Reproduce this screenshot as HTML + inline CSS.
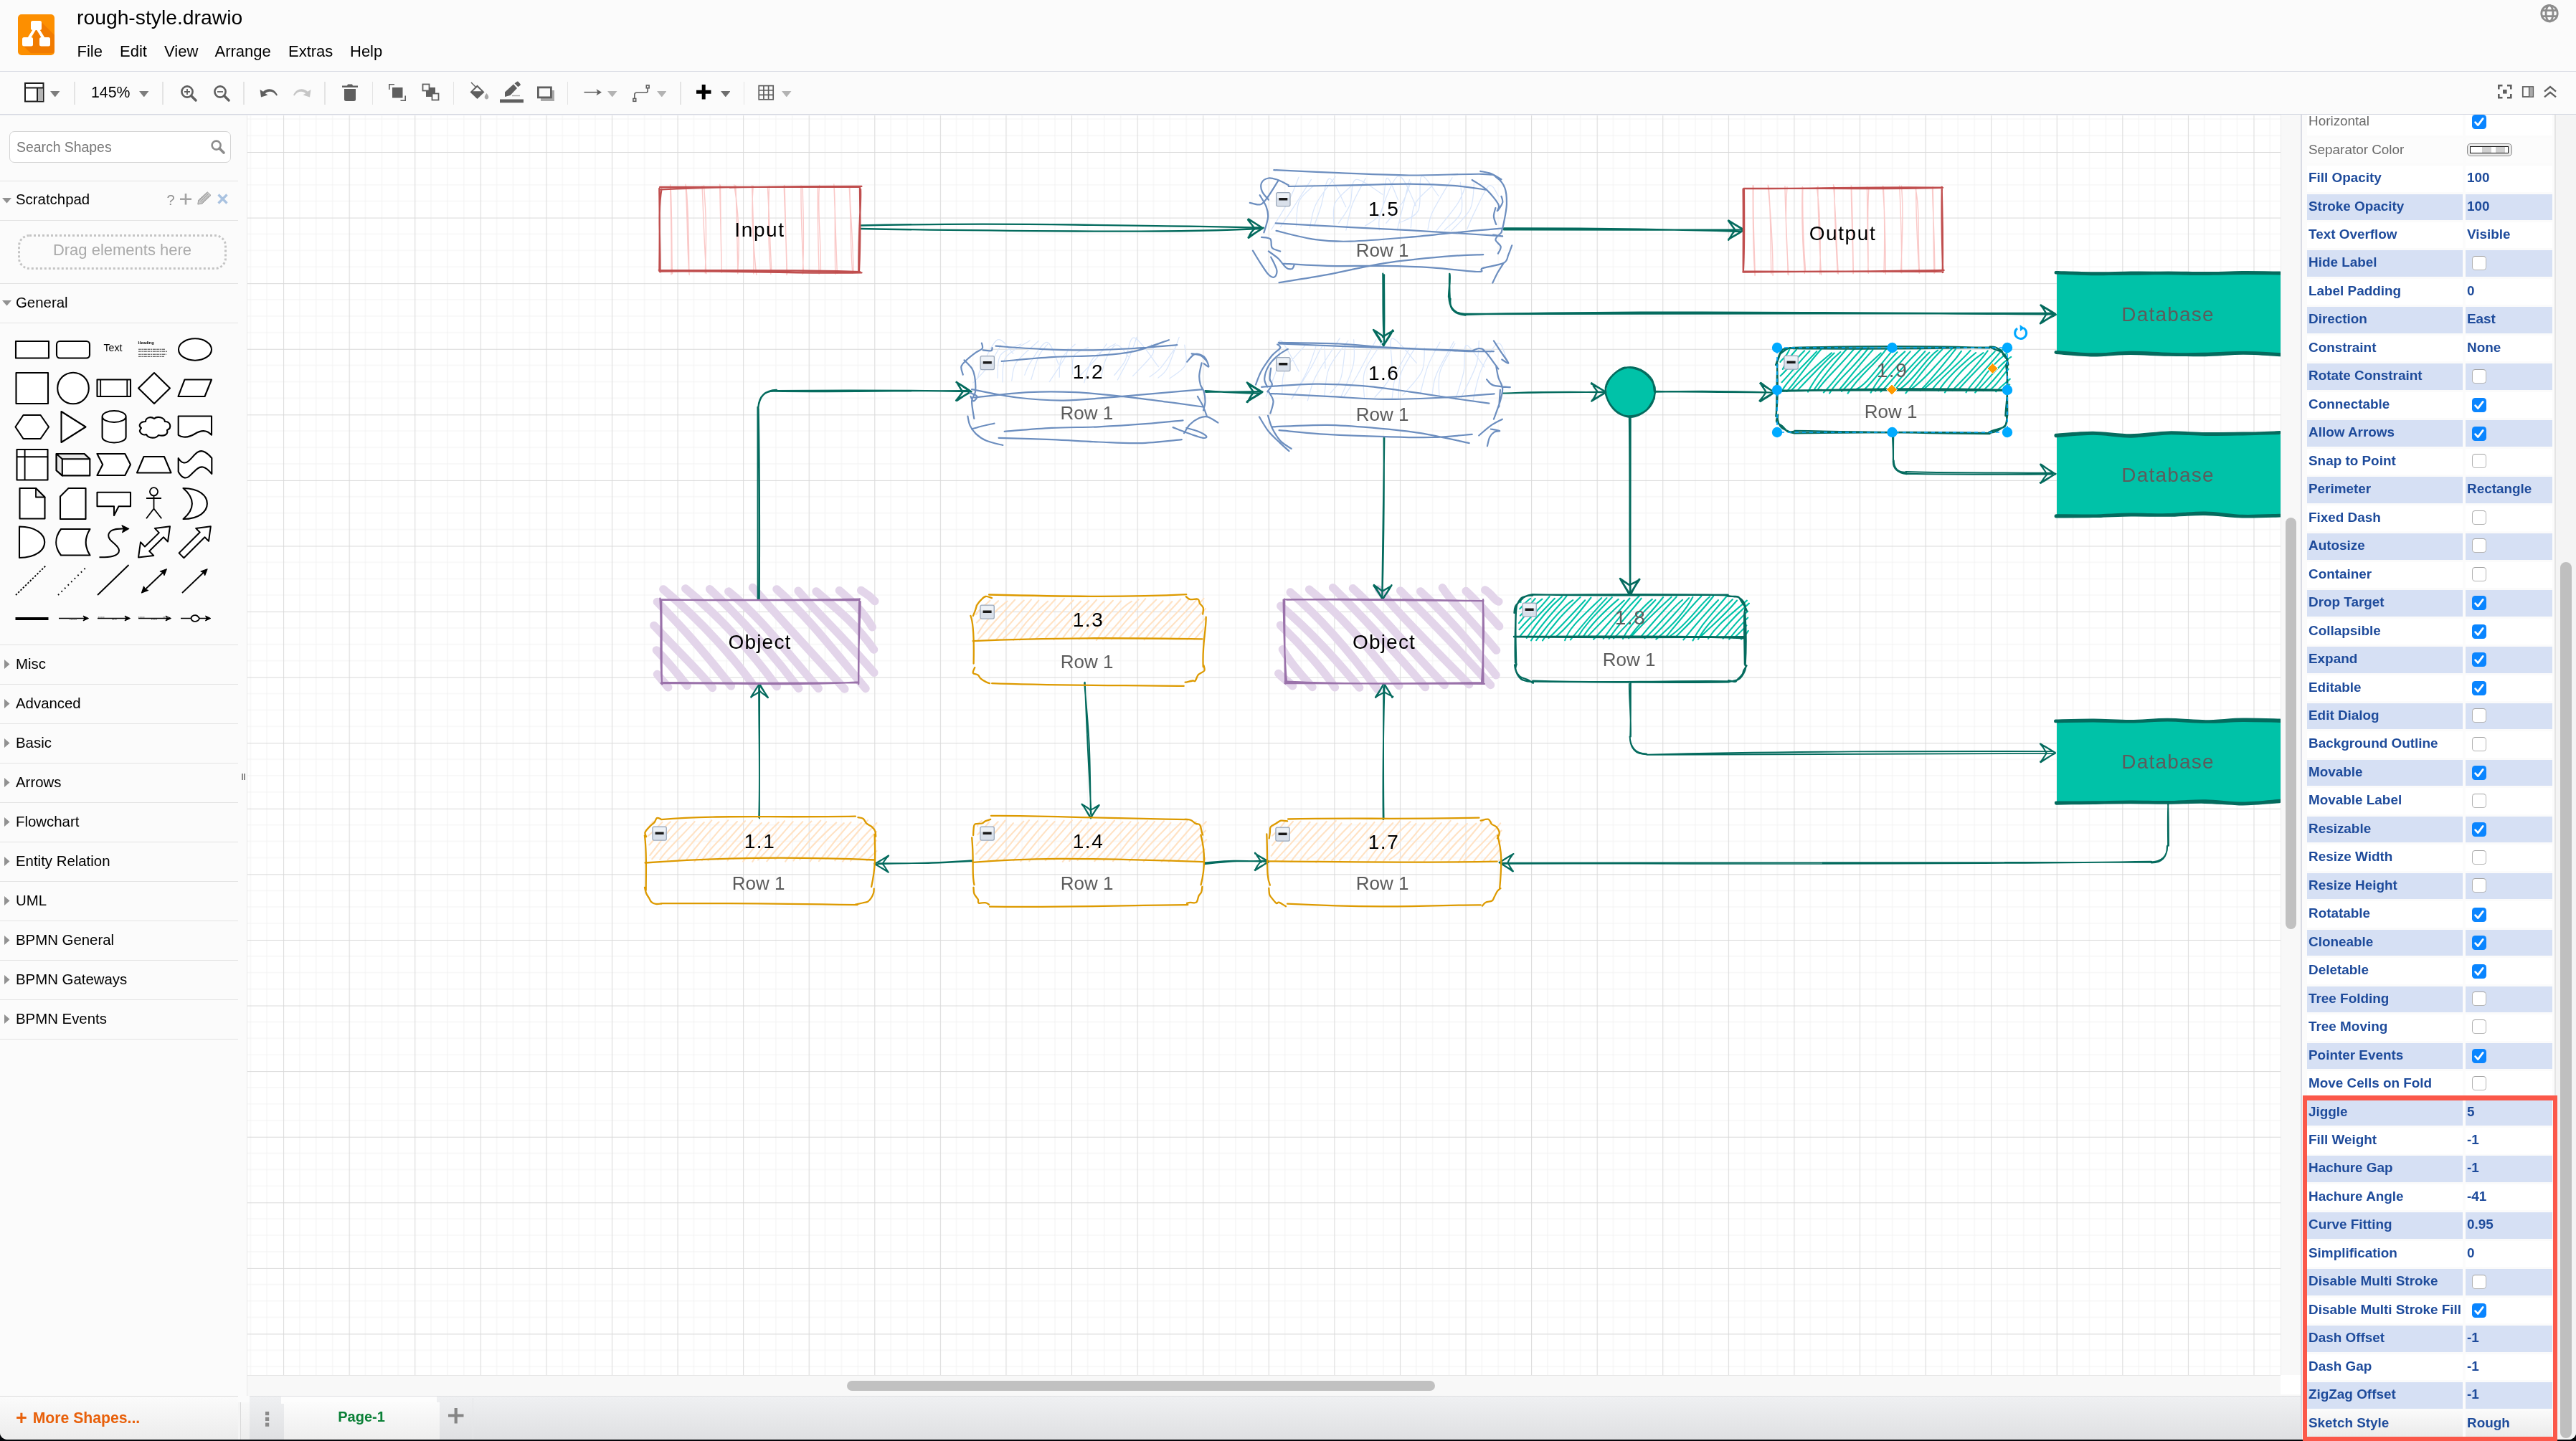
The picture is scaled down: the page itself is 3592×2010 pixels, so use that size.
<!DOCTYPE html><html><head><meta charset="utf-8"><title>rough-style.drawio</title><style>
*{box-sizing:border-box;margin:0;padding:0}
html,body{width:3592px;height:2010px;overflow:hidden;background:#04070b;font-family:"Liberation Sans",sans-serif;}
#app{will-change:transform;position:absolute;left:0;top:0;width:3592px;height:2008px;background:#fbfbfb;border-radius:0 0 10px 10px;overflow:hidden}
.abs{position:absolute}
#menubar{left:0;top:0;width:3592px;height:100px;background:#fbfbfb;border-bottom:1px solid #d6d9e2}
#title{left:107px;top:7px;font-size:28.3px;line-height:34px;color:#000;white-space:nowrap}
.menu{top:57.3px;font-size:22px;line-height:30px;color:#000;white-space:nowrap}
#toolbar{left:0;top:100px;width:3592px;height:60px;background:#fbfbfb;border-bottom:1px solid #d6d9e2}
.sep{top:114px;width:1.6px;height:32px;background:#e4e4e4}
#sidebar{left:0;top:160px;width:332px;height:1788px;background:#fbfbfb}
#split{left:332px;top:160px;width:13px;height:1848px;background:#fbfbfb}
.hr{left:0;width:332px;height:1px;background:#e3e3e3}
.stitle{left:22px;font-size:20.4px;line-height:26px;color:#000;white-space:nowrap}
#footer{left:0;top:1947px;width:332px;height:61px;border-top:1px solid #dcdcdc;background:linear-gradient(#fbfbfb,#ececec)}
#tabs{left:348px;top:1947px;width:2861px;height:61px;border-top:1px solid #dfe0e2;background:linear-gradient(#eff0f2,#dfe0e2)}
#hscroll{left:345px;top:1918px;width:2869px;height:29px;background:#f8f8f8;border-top:1px solid #e6e6e6}
#canvas{left:345px;top:160px;width:2835px;height:1758px;background:#fff;overflow:hidden}
#cedge{left:344px;top:160px;width:1px;height:1787px;background:#e8e8e8}
#vtrack{left:3180px;top:160px;width:28px;height:1758px;background:#f8f8f8;border-left:1px solid #ececec}
#panel{left:3208px;top:160px;width:384px;height:1848px;background:#fbfbfb;border-left:2px solid #d9dbe4}
.pl{left:3217px;width:217px;height:36.5px;font-size:18.9px;line-height:34px;font-weight:bold;color:#1e4b9b;padding-left:2px;white-space:nowrap;overflow:visible}
.pv{left:3438px;width:121px;height:36.5px;font-size:18.9px;line-height:34px;font-weight:bold;color:#1e4b9b;padding-left:2px;white-space:nowrap}
.alt{background:#d6e0f4}
.wh{background:#fff}
.sk{background:linear-gradient(#fafafa,#ebebeb)}
.cb{width:20px;height:20px;border-radius:4.5px}
.cb.on{background:#0a85ff}
.cb.off{background:#fff;border:1.5px solid #b4b4b4;border-top-color:#a2a2a2}
text{font-family:"Liberation Sans",sans-serif}
</style></head><body><div id="app">
<div id="menubar" class="abs"></div>
<svg class="abs" style="left:25px;top:20px" width="51" height="57" viewBox="0 0 51 57">
<rect x="0" y="0" width="51" height="57" rx="5" fill="#fd8f00"/>
<path d="M33 11 L51 29 L51 50 Q51 54.2 47 54.2 L18 54.2 L7.5 44 L20 40 L22 24 Z" fill="#f17b00"/>
<path d="M25.5 17 L12.5 38 M25.5 17 L38.5 38" stroke="#fff" stroke-width="4" fill="none"/>
<rect x="18" y="9" width="15" height="13" rx="2.5" fill="#fff"/>
<rect x="6" y="32" width="15" height="12.5" rx="2.5" fill="#fff"/>
<rect x="30" y="32" width="15" height="12.5" rx="2.5" fill="#fff"/>
</svg>
<div id="title" class="abs">rough-style.drawio</div>
<div class="abs menu" style="left:107.5px">File</div>
<div class="abs menu" style="left:167px">Edit</div>
<div class="abs menu" style="left:229px">View</div>
<div class="abs menu" style="left:299.5px">Arrange</div>
<div class="abs menu" style="left:402px">Extras</div>
<div class="abs menu" style="left:488px">Help</div>
<svg class="abs" style="left:3540px;top:4px" width="30" height="30" viewBox="0 0 30 30" fill="none" stroke="#8c8c8c" stroke-width="2.8">
<circle cx="15" cy="14.7" r="11.2"/><ellipse cx="15" cy="14.7" rx="5" ry="11.2"/><path d="M4.5 10.7 H25.5 M4.5 18.7 H25.5"/></svg>
<div id="toolbar" class="abs"></div>
<div class="abs sep" style="left:103px"></div>
<div class="abs sep" style="left:226px"></div>
<div class="abs sep" style="left:339px"></div>
<div class="abs sep" style="left:452px"></div>
<div class="abs sep" style="left:518.5px"></div>
<div class="abs sep" style="left:631.5px"></div>
<div class="abs sep" style="left:790.5px"></div>
<div class="abs sep" style="left:948px"></div>
<div class="abs sep" style="left:1036.5px"></div>
<svg class="abs" style="left:33px;top:114px" width="30" height="30" viewBox="0 0 30 30">
<rect x="2" y="2" width="25.5" height="25.5" fill="#fff" stroke="#1e1e1e" stroke-width="2"/>
<rect x="19" y="9" width="8" height="18" fill="#b4b4b4"/>
<path d="M2 8.5 H27.5 M19 8.5 V27.5" stroke="#1e1e1e" stroke-width="2" fill="none"/></svg>
<svg class="abs" style="left:70px;top:126.5px" width="13.5" height="8.5" viewBox="0 0 13.5 8.5"><path d="M0 0 H13.5 L6.75 8.5 Z" fill="#7d7d7d"/></svg>
<div class="abs" style="left:127px;top:114px;font-size:21.3px;line-height:30px;color:#000">145%</div>
<svg class="abs" style="left:194px;top:126.5px" width="13.5" height="8.5" viewBox="0 0 13.5 8.5"><path d="M0 0 H13.5 L6.75 8.5 Z" fill="#7d7d7d"/></svg>
<svg class="abs" style="left:250.5px;top:118px" width="24" height="24" viewBox="0 0 24 24" fill="none">
<circle cx="10" cy="10" r="7.6" stroke="#5f5f5f" stroke-width="2.6"/><path d="M6 10 H14 M10 6 V14" stroke="#5f5f5f" stroke-width="1.8"/><path d="M15.5 15.5 L22 22" stroke="#5f5f5f" stroke-width="3.4" stroke-linecap="round"/></svg>
<svg class="abs" style="left:296.5px;top:118px" width="24" height="24" viewBox="0 0 24 24" fill="none">
<circle cx="10" cy="10" r="7.6" stroke="#5f5f5f" stroke-width="2.6"/><path d="M6 10 H14" stroke="#5f5f5f" stroke-width="1.8"/><path d="M15.5 15.5 L22 22" stroke="#5f5f5f" stroke-width="3.4" stroke-linecap="round"/></svg>
<svg class="abs" style="left:362px;top:121px" width="26" height="16" viewBox="0 0 26 16"><path d="M0.5 4 L2 14.5 L11.5 11.5 L7.8 9.2 C12 5.5 19 5.5 23.5 12.5 L25 11.8 C21 2 11 1 5 6.8 Z" fill="#5f5f5f"/></svg>
<svg class="abs" style="left:407.5px;top:121px" width="26" height="16" viewBox="0 0 26 16"><path d="M25.5 4 L24 14.5 L14.5 11.5 L18.2 9.2 C14 5.5 7 5.5 2.5 12.5 L1 11.8 C5 2 15 1 21 6.8 Z" fill="#c6c6c6"/></svg>
<svg class="abs" style="left:476px;top:116px" width="24" height="26" viewBox="0 0 24 26"><path d="M1 3.5 H8 L9 1.5 H15 L16 3.5 H23 V6 H1 Z M4 8 H20 V22.5 Q20 25 17.5 25 H6.5 Q4 25 4 22.5 Z" fill="#5f5f5f"/></svg>
<svg class="abs" style="left:541px;top:116px" width="26" height="26" viewBox="0 0 26 26" fill="none">
<path d="M1.8 9 V1.8 H9" stroke="#5f5f5f" stroke-width="1.6"/><path d="M17.5 24.2 H24.2 V17.5" stroke="#5f5f5f" stroke-width="1.6"/>
<rect x="6" y="6" width="14.5" height="14.5" fill="#5f5f5f"/></svg>
<svg class="abs" style="left:588px;top:116px" width="26" height="26" viewBox="0 0 26 26" fill="none">
<rect x="6" y="6" width="13" height="13" fill="#5f5f5f"/>
<rect x="1.5" y="1.5" width="9" height="9" fill="#fbfbfb" stroke="#5f5f5f" stroke-width="1.8"/>
<rect x="14.5" y="14.5" width="9" height="9" fill="#fbfbfb" stroke="#5f5f5f" stroke-width="1.8"/></svg>
<svg class="abs" style="left:654px;top:114px" width="29" height="26" viewBox="0 0 29 26">
<path d="M3 1 L12 10" stroke="#5f5f5f" stroke-width="1.4" fill="none"/>
<path d="M11.5 4.5 L21.5 14.5 L11.5 24 L1.5 14.5 Z" fill="#5f5f5f"/>
<path d="M11.5 7.5 L17.5 13.2 H5.5 Z" fill="#fbfbfb"/>
<path d="M24.5 16 Q28 20.5 27.2 22.3 Q26.3 24.5 24.5 24.5 Q22.6 24.5 21.8 22.3 Q21 20.5 24.5 16 Z" fill="#a9a9a9"/></svg>
<svg class="abs" style="left:697px;top:113px" width="34" height="32" viewBox="0 0 34 32">
<path d="M20.5 3.2 L24 0.8 Q25.2 0.2 26 1.2 L28.6 4.2 Q29.3 5.2 28.4 6 L25.4 8.2 Z" fill="#5f5f5f"/>
<path d="M19 4.6 L24 10 L14.5 20 L7 22 L7 15.5 Z" fill="#5f5f5f"/>
<path d="M17 20.5 H28" stroke="#a9a9a9" stroke-width="1.5"/>
<rect x="0" y="25.5" width="33" height="4.8" fill="#5f5f5f"/></svg>
<svg class="abs" style="left:748px;top:119px" width="26" height="23" viewBox="0 0 26 23">
<rect x="6" y="7" width="19" height="15" fill="#a9a9a9"/>
<rect x="2.4" y="2.9" width="18" height="14" fill="#fbfbfb" stroke="#5f5f5f" stroke-width="2.8"/></svg>
<svg class="abs" style="left:814px;top:121px" width="26" height="16" viewBox="0 0 26 16"><path d="M0.5 7.7 H21" stroke="#5f5f5f" stroke-width="1.6"/><path d="M17.5 3.2 L25 7.7 L17.5 12.2 L19.3 7.7 Z" fill="#5f5f5f"/></svg>
<svg class="abs" style="left:847px;top:126.5px" width="13.5" height="8.5" viewBox="0 0 13.5 8.5"><path d="M0 0 H13.5 L6.75 8.5 Z" fill="#b3b3b3"/></svg>
<svg class="abs" style="left:881px;top:117px" width="28" height="27" viewBox="0 0 28 27" fill="none" stroke="#5f5f5f" stroke-width="1.6">
<path d="M3.8 20.5 V15 Q3.8 12.3 6.5 12.3 H19.5 Q22.2 12.3 22.2 9.6 V6"/><rect x="1.9" y="20.5" width="3.8" height="3.8" fill="#fbfbfb"/><rect x="20.3" y="2" width="3.8" height="3.8" fill="#fbfbfb"/></svg>
<svg class="abs" style="left:915.5px;top:126.5px" width="13.5" height="8.5" viewBox="0 0 13.5 8.5"><path d="M0 0 H13.5 L6.75 8.5 Z" fill="#b3b3b3"/></svg>
<svg class="abs" style="left:970px;top:117px" width="23" height="23" viewBox="0 0 23 23"><path d="M1 11.2 H21.5 M11.2 1 V21.5" stroke="#000" stroke-width="5"/></svg>
<svg class="abs" style="left:1004.5px;top:126.5px" width="13.5" height="8.5" viewBox="0 0 13.5 8.5"><path d="M0 0 H13.5 L6.75 8.5 Z" fill="#6e6e6e"/></svg>
<svg class="abs" style="left:1057px;top:118px" width="23" height="23" viewBox="0 0 23 23" fill="none" stroke="#5f5f5f" stroke-width="1.7">
<rect x="1.2" y="1.6" width="20" height="19.2"/><path d="M7.9 1.6 V20.8 M14.6 1.6 V20.8 M1.2 8 H21.2 M1.2 14.4 H21.2"/></svg>
<svg class="abs" style="left:1090px;top:126.5px" width="13.5" height="8.5" viewBox="0 0 13.5 8.5"><path d="M0 0 H13.5 L6.75 8.5 Z" fill="#b3b3b3"/></svg>
<svg class="abs" style="left:3482px;top:117px" width="22" height="22" viewBox="0 0 22 22" fill="none" stroke="#5f5f5f" stroke-width="2.6">
<path d="M2.3 7.5 V2.3 H7.5 M14 2.3 H19.3 V7.5 M19.3 14 V19.3 H14 M7.5 19.3 H2.3 V14"/><rect x="8" y="8" width="5.6" height="5.6" fill="#5f5f5f" stroke="none"/></svg>
<svg class="abs" style="left:3516px;top:119px" width="18" height="18" viewBox="0 0 18 18">
<rect x="1.8" y="2" width="14.4" height="14" fill="#fbfbfb" stroke="#5f5f5f" stroke-width="1.8"/><rect x="11" y="2.5" width="4.6" height="13" fill="#a9a9a9"/><path d="M10.6 2 V16" stroke="#5f5f5f" stroke-width="1.4"/></svg>
<svg class="abs" style="left:3546px;top:118px" width="20" height="20" viewBox="0 0 20 20" fill="none" stroke="#5f5f5f" stroke-width="2.3"><path d="M2 9.6 L10 3 L18 9.6 M2 17.4 L10 10.8 L18 17.4"/></svg>
<div id="sidebar" class="abs"></div><div id="split" class="abs"></div>
<div class="abs" style="left:13px;top:183px;width:309px;height:44px;border:1px solid #d3d3d3;border-radius:7px;background:#fff"></div>
<div class="abs" style="left:23px;top:190px;font-size:19.4px;line-height:30px;color:#777;white-space:nowrap">Search Shapes</div>
<svg class="abs" style="left:293px;top:194px" width="22" height="22" viewBox="0 0 22 22" fill="none"><circle cx="8.6" cy="8.6" r="6" stroke="#8c8c8c" stroke-width="2.6"/><path d="M13 13 L19 19" stroke="#8c8c8c" stroke-width="3.6" stroke-linecap="round"/></svg>
<div class="abs hr" style="top:252px"></div>
<div class="abs hr" style="top:307px"></div>
<div class="abs hr" style="top:395px"></div>
<div class="abs hr" style="top:450px"></div>
<svg class="abs" style="left:3px;top:276px" width="14" height="8"><path d="M0 0 H13 L6.5 7.5 Z" fill="#919191"/></svg>
<div class="abs stitle" style="top:265px">Scratchpad</div>
<div class="abs" style="left:232.5px;top:265px;font-size:20px;line-height:28px;color:#8f8f8f">?</div>
<svg class="abs" style="left:251px;top:270px" width="16" height="16"><path d="M0 7.8 H16 M8 0 V15.6" stroke="#a3a3a3" stroke-width="2.6"/></svg>
<svg class="abs" style="left:275px;top:267px" width="20" height="19" viewBox="0 0 20 19"><path d="M14.2 0.8 L19 5.4 L7 17 L0.8 18 L1.8 12 Z" fill="#c9c9c9" stroke="#9b9b9b" stroke-width="1"/><path d="M4.5 14.5 L15 4 M2.8 12.8 L13.4 2.2 M6.3 16 L17 5.6" stroke="#9b9b9b" stroke-width="0.9"/></svg>
<svg class="abs" style="left:303px;top:270px" width="15" height="15"><path d="M1.5 1.5 L13.5 13.5 M13.5 1.5 L1.5 13.5" stroke="#a9c2e0" stroke-width="3.2"/></svg>
<div class="abs" style="left:25px;top:327px;width:291px;height:49px;border:3px dotted #c4c4c4;border-radius:16px"></div>
<div class="abs" style="left:25px;top:334px;width:291px;text-align:center;font-size:22px;line-height:30px;color:#aaa;white-space:nowrap">Drag elements here</div>
<svg class="abs" style="left:3px;top:419px" width="14" height="8"><path d="M0 0 H13 L6.5 7.5 Z" fill="#919191"/></svg>
<div class="abs stitle" style="top:408.5px">General</div>
<svg class="abs" style="left:0;top:460px" width="332" height="430" viewBox="0 460 332 430" fill="none" stroke="#000" stroke-width="2.1" stroke-linejoin="round">
<rect x="22" y="476" width="46" height="23.5" fill="#fff"/>
<rect x="79" y="476" width="46" height="23.5" rx="4.5" fill="#fff"/>
<text x="157.5" y="489.6" font-size="14.2" fill="#000" stroke="none" text-anchor="middle">Text</text>
<text x="192.5" y="479.7" font-size="5.6" font-weight="bold" fill="#000" stroke="none">Heading</text>
<path d="M193 487.2 H230" stroke="#3a3a3a" stroke-width="1" stroke-dasharray="3.6 0.8 2.2 0.8 4.4 0.8"/>
<path d="M193 490.2 H233" stroke="#3a3a3a" stroke-width="1" stroke-dasharray="3.6 0.8 2.2 0.8 4.4 0.8"/>
<path d="M193 494.2 H232" stroke="#3a3a3a" stroke-width="1" stroke-dasharray="3.6 0.8 2.2 0.8 4.4 0.8"/>
<path d="M193 497.3 H229" stroke="#3a3a3a" stroke-width="1" stroke-dasharray="3.6 0.8 2.2 0.8 4.4 0.8"/>
<ellipse cx="272" cy="487.5" rx="23" ry="15.2" fill="#fff"/>
<rect x="22.5" y="520" width="44.5" height="43" fill="#fff"/>
<circle cx="102" cy="541.5" r="21.8" fill="#fff"/>
<rect x="135.5" y="529.5" width="46.5" height="23.5" fill="#fff"/><path d="M140.2 529.5 V553 M177.3 529.5 V553" stroke-width="1.8"/>
<path d="M215 520 L237 541.5 L215 563 L193 541.5 Z" fill="#fff"/>
<path d="M257.5 529.5 H295 L285.5 553 H248.5 Z" fill="#fff"/>
<path d="M32.5 579 H56.5 L68 595.5 L56.5 612 H32.5 L21.5 595.5 Z" fill="#fff"/>
<path d="M85.5 574 L119.5 595.5 L85.5 617 Z" fill="#fff"/>
<path d="M142.6 581 V609.5 A16.5 8 0 0 0 175.6 609.5 V581 A16.5 8 0 0 0 142.6 581 A16.5 8 0 0 0 175.6 581" fill="#fff"/>
<path d="M203 588 C196 588 192 593 197 597 C192 602 198 608 204 606 C207 612 218 612 221 607 C229 609 235 606 233 600 C240 597 238 588 230 588 C229 582 219 580 215 584 C210 580 203 583 203 588 Z" fill="#fff"/>
<path d="M248.7 580.5 H295 V606.8 C289 600 281 599.5 272 605 C263 610.5 255 611 248.7 606.8 Z" fill="#fff"/>
<rect x="23.5" y="627" width="43" height="42.5" fill="#fff"/><path d="M34.6 627 V669.5 M23.5 637.2 H66.5" stroke-width="1.9"/>
<path d="M78.7 633 H117.5 L125.3 640.2 V663.4 H86.8 L78.7 656.2 Z" fill="#fff"/><path d="M78.7 633 L86.8 640.2 V663.4 L78.7 656.2 Z M78.7 633 H117.5 L125.3 640.2 H86.8 Z" fill="#e6e6e6"/>
<path d="M135.4 633 H174.3 L182 648 L174.3 663 H135.4 L143.2 648 Z" fill="#fff"/>
<path d="M200.5 637 H229 L238.5 659.5 H191 Z" fill="#fff"/>
<path d="M248.7 639 C253 646 258 647.5 263 643 C270 637 275 627 283 629.5 C288 631 292 635 295.3 639 V661 C292 657 288 652.5 283 651.5 C275 650 270 660 263 665 C258 668.5 253 666 248.7 658 Z" fill="#fff"/>
<path d="M27.5 681 H50 L62.5 693.5 V723.5 H27.5 Z" fill="#fff"/><path d="M50 681 V693.5 H62.5 Z" fill="#e6e6e6" stroke-width="1.8"/>
<path d="M95.5 681 H119.5 V724 H84 V692.5 Z" fill="#fff"/>
<path d="M135.5 686.7 H182 V706.2 H165.5 L159 719 V706.2 H135.5 Z" fill="#fff"/>
<circle cx="214.5" cy="685.8" r="5.6" fill="#fff" stroke-width="1.8"/><path d="M214.5 691.5 V709.5 M204 695 H225 M214.5 709.5 L204 723.3 M214.5 709.5 L225.3 723.3" stroke-width="1.8"/>
<path d="M255.5 681 C300 681 300 724 255.5 724 C272 710 272 695 255.5 681 Z" fill="#fff"/>
<path d="M27 734.5 C74 734.5 74 778 27 778 Z" fill="#fff"/>
<path d="M85 738 H125.5 C118 750 118 763 125.5 774.5 H85 C76 763 76 750 85 738 Z" fill="#fff"/>
<path d="M138.5 777.3 C152 777.5 166.5 776 166 767.5 C165.5 759 149 755 151.5 745 C153.5 738 163 737.4 172.5 737.6" stroke-width="2"/><path d="M179.7 737.6 L170 732.8 L172.5 737.6 L170.6 742.7 Z" fill="#000" stroke-width="1.2"/>
<path d="M193.0 777.5 L214.2 774.9 L208.2 768.7 L228.0 749.3 L234.0 755.5 L237.0 734.3 L215.8 736.9 L221.8 743.1 L202.0 762.5 L196.0 756.3 Z" fill="#fff" stroke-width="2"/>
<path d="M256.4 778.2 L285.5 749.3 L291.0 754.9 L293.8 734.3 L273.1 736.9 L278.7 742.5 L249.6 771.4 Z" fill="#fff" stroke-width="2"/>
<path d="M22 830 L64 789" stroke-width="1.9" stroke-dasharray="2.4 2.2"/>
<path d="M81 830 L119.5 792" stroke-width="1.9" stroke-dasharray="1.8 4.6"/>
<path d="M136 830 L179.5 788" stroke-width="1.9"/>
<path d="M200.5 824 L229.5 796.5" stroke-width="1.8"/><path d="M197.5 827 L200.5 818 L202.6 822 L206.5 823.5 Z M232.3 793.7 L229 802.5 L227.2 798.6 L223.3 797 Z" fill="#000" stroke-width="1.2"/>
<path d="M254 827 L286 796.5" stroke-width="1.8"/><path d="M289 793.7 L285.7 802.5 L283.9 798.6 L280 797 Z" fill="#000" stroke-width="1.2"/>
<path d="M21.5 863 H67.5" stroke-width="4"/>
<path d="M82 862.5 H120" stroke-width="1.4"/><path d="M123.5 862.5 L116 859 L118 862.5 L116 866 Z" fill="#000" stroke-width="1"/><path d="M97 863.5 H107" stroke="#555" stroke-width="2.2" stroke-dasharray="1.4 0.7"/>
<path d="M136 862.5 H178" stroke-width="1.4"/><path d="M181.5 862.5 L174 859 L176 862.5 L174 866 Z" fill="#000" stroke-width="1"/><path d="M137 861 H146 M156 864 H163" stroke="#777" stroke-width="1.5" stroke-dasharray="1.2 0.6"/>
<path d="M193 862.5 H235" stroke-width="1.4"/><path d="M238.5 862.5 L231 859 L233 862.5 L231 866 Z" fill="#000" stroke-width="1"/><path d="M193 861 H202 M211 864 H219 M227 861 H236" stroke="#777" stroke-width="1.5" stroke-dasharray="1.2 0.6"/>
<path d="M252 862.5 H290" stroke-width="1.4"/><path d="M293.8 862.5 L286.5 859 L288.3 862.5 L286.5 866 Z" fill="#000" stroke-width="1"/><path d="M268 859.5 C272 857 275 858.5 276 860 C278.5 862 278.5 863.5 276 865.5 C273 867.5 270 867 268 865.5 C266 863.5 266 861.5 268 859.5 Z" fill="#fff" stroke-width="1.8"/>
</svg>
<div class="abs hr" style="top:898.5px"></div>
<svg class="abs" style="left:6px;top:919.5px" width="8" height="13"><path d="M0 0 L7.5 6.5 L0 13 Z" fill="#919191"/></svg>
<div class="abs stitle" style="top:912.5px">Misc</div>
<div class="abs hr" style="top:953.5px"></div>
<svg class="abs" style="left:6px;top:974.5px" width="8" height="13"><path d="M0 0 L7.5 6.5 L0 13 Z" fill="#919191"/></svg>
<div class="abs stitle" style="top:967.5px">Advanced</div>
<div class="abs hr" style="top:1008.5px"></div>
<svg class="abs" style="left:6px;top:1029.5px" width="8" height="13"><path d="M0 0 L7.5 6.5 L0 13 Z" fill="#919191"/></svg>
<div class="abs stitle" style="top:1022.5px">Basic</div>
<div class="abs hr" style="top:1063.5px"></div>
<svg class="abs" style="left:6px;top:1084.5px" width="8" height="13"><path d="M0 0 L7.5 6.5 L0 13 Z" fill="#919191"/></svg>
<div class="abs stitle" style="top:1077.5px">Arrows</div>
<div class="abs hr" style="top:1118.5px"></div>
<svg class="abs" style="left:6px;top:1139.5px" width="8" height="13"><path d="M0 0 L7.5 6.5 L0 13 Z" fill="#919191"/></svg>
<div class="abs stitle" style="top:1132.5px">Flowchart</div>
<div class="abs hr" style="top:1173.5px"></div>
<svg class="abs" style="left:6px;top:1194.5px" width="8" height="13"><path d="M0 0 L7.5 6.5 L0 13 Z" fill="#919191"/></svg>
<div class="abs stitle" style="top:1187.5px">Entity Relation</div>
<div class="abs hr" style="top:1228.5px"></div>
<svg class="abs" style="left:6px;top:1249.5px" width="8" height="13"><path d="M0 0 L7.5 6.5 L0 13 Z" fill="#919191"/></svg>
<div class="abs stitle" style="top:1242.5px">UML</div>
<div class="abs hr" style="top:1283.5px"></div>
<svg class="abs" style="left:6px;top:1304.5px" width="8" height="13"><path d="M0 0 L7.5 6.5 L0 13 Z" fill="#919191"/></svg>
<div class="abs stitle" style="top:1297.5px">BPMN General</div>
<div class="abs hr" style="top:1338.5px"></div>
<svg class="abs" style="left:6px;top:1359.5px" width="8" height="13"><path d="M0 0 L7.5 6.5 L0 13 Z" fill="#919191"/></svg>
<div class="abs stitle" style="top:1352.5px">BPMN Gateways</div>
<div class="abs hr" style="top:1393.5px"></div>
<svg class="abs" style="left:6px;top:1414.5px" width="8" height="13"><path d="M0 0 L7.5 6.5 L0 13 Z" fill="#919191"/></svg>
<div class="abs stitle" style="top:1407.5px">BPMN Events</div>
<div class="abs hr" style="top:1448.5px"></div>
<div id="footer" class="abs"></div>
<div class="abs" style="left:22px;top:1962px;font-size:21.2px;line-height:28px;font-weight:bold;color:#e8600a;white-space:nowrap"><span style="font-size:27px;position:relative;top:1.5px;margin-right:2px">+</span> More Shapes...</div>
<div class="abs" style="left:337px;top:1079px;width:1.5px;height:9px;background:#8a8a8a"></div><div class="abs" style="left:340px;top:1079px;width:1.5px;height:9px;background:#8a8a8a"></div>
<div id="canvas" class="abs"><svg class="abs" style="left:0;top:0" width="2835" height="1758" viewBox="345 160 2835 1758"><defs><pattern id="grid" x="395.05" y="212.0" width="91.58" height="91.58" patternUnits="userSpaceOnUse"><path d="M22.9 0 V91.58 M45.8 0 V91.58 M68.7 0 V91.58 M0 22.9 H91.58 M0 45.8 H91.58 M0 68.7 H91.58" stroke="#f1f1f1" stroke-width="0.9" fill="none"/><path d="M0.6 0 V91.58 M0 0.6 H91.58" stroke="#d9d9d9" stroke-width="1" fill="none"/></pattern></defs>
<rect x="345" y="160" width="2835" height="1758" fill="url(#grid)"/>
<path d="M2070.8 823.0 C2080.4 828.2 2083.6 837.7 2089.8 839.1 M2044.2 824.4 C2056.8 835.8 2065.5 845.7 2090.6 873.7 M2011.4 819.8 C2025.8 843.1 2044.7 856.0 2086.5 907.1 M1980.7 824.9 C2023.4 863.6 2062.2 911.6 2086.0 941.7 M1952.7 823.9 C1978.9 850.7 2004.8 873.5 2078.5 955.5 M1922.5 822.1 C1946.2 851.0 1980.9 886.4 2048.6 954.7 M1886.5 820.8 C1919.7 849.8 1944.3 882.5 2014.2 955.5 M1858.6 819.7 C1901.5 861.4 1939.0 902.4 1987.4 958.6 M1825.6 822.2 C1867.4 855.4 1902.5 896.9 1950.8 956.4 M1799.2 826.1 C1831.7 853.6 1869.1 891.2 1920.9 961.5 M1785.8 845.3 C1829.1 881.5 1866.7 924.9 1895.6 959.1 M1785.5 872.0 C1817.9 903.1 1847.3 937.3 1861.4 958.8 M1788.5 905.7 C1796.1 919.4 1806.1 932.6 1830.0 958.4 M1782.8 939.4 C1788.5 947.0 1794.5 947.8 1802.6 956.8" fill="none" stroke="#e3d5ea" stroke-width="11.5" stroke-linecap="round"/>
<path d="M1200.7 823.5 C1204.0 825.8 1210.6 828.5 1219.8 838.6 M1170.4 823.7 C1189.0 839.4 1204.1 853.9 1216.2 874.7 M1138.1 825.0 C1165.2 847.8 1193.8 870.4 1218.5 906.1 M1113.1 824.2 C1141.6 857.3 1174.8 887.1 1218.8 938.3 M1083.0 821.9 C1124.9 858.7 1160.1 904.4 1207.0 960.4 M1049.5 819.6 C1084.4 859.8 1117.5 894.5 1177.8 961.1 M1015.8 825.1 C1052.8 854.5 1082.5 891.4 1141.2 960.3 M989.7 821.8 C1038.8 868.0 1082.7 918.9 1113.7 960.2 M955.8 821.0 C1001.1 858.4 1043.1 902.2 1083.2 957.5 M924.9 822.0 C979.2 867.2 1026.5 921.3 1051.2 957.0 M916.4 839.4 C946.9 871.0 971.5 896.2 1019.4 956.9 M911.9 872.4 C944.0 907.1 975.7 936.9 993.4 959.4 M915.4 906.9 C927.2 918.9 939.0 932.2 958.2 956.6 M916.5 940.5 C920.3 945.3 927.1 952.7 931.7 958.7" fill="none" stroke="#e3d5ea" stroke-width="11.5" stroke-linecap="round"/>
<path d="M1199 314.5 Q1330 311.5 1500 313.5 T1757 317.5 M1199 319 Q1330 321.5 1500 322.5 T1757 319" fill="none" stroke="#046b5e" stroke-width="2.3" stroke-linecap="round" stroke-linejoin="round" />
<path d="M1740.6 331.3 C1746.7 326.8 1752.4 323.9 1761.6 317.7 M1741.1 331.7 C1746.1 327.9 1750.9 324.0 1761.0 318.1 M1760.9 318.4 C1756.8 315.5 1751.6 312.4 1741.0 305.7 M1760.8 318.2 C1755.7 314.9 1750.9 312.0 1741.0 305.6 M1740.1 306.5 C1744.0 311.6 1747.1 315.0 1749.2 319.0 M1749.8 319.0 C1746.2 321.3 1744.1 324.2 1741.2 330.7" fill="none" stroke="#046b5e" stroke-width="2.5" stroke-linecap="round" stroke-linejoin="round" />
<path d="M2097.0 318.4 C2200.2 318.3 2302.7 319.0 2427.0 323.1 M2096.8 320.3 C2214.9 321.1 2334.9 319.8 2428.6 320.6" fill="none" stroke="#046b5e" stroke-width="2.3" stroke-linecap="round" stroke-linejoin="round" />
<path d="M2410.8 333.3 C2416.1 330.2 2421.1 328.0 2431.0 321.1 M2410.4 333.5 C2418.5 329.4 2425.6 324.7 2431.4 321.1 M2431.9 320.5 C2425.6 316.9 2420.0 313.9 2410.3 307.6 M2431.1 320.8 C2424.4 316.4 2416.5 312.0 2410.6 307.8 M2410.0 308.0 C2413.4 312.1 2414.9 314.6 2419.2 320.4 M2419.4 321.8 C2416.4 324.0 2415.5 326.8 2410.3 334.6" fill="none" stroke="#046b5e" stroke-width="2.5" stroke-linecap="round" stroke-linejoin="round" />
<path d="M1930.1 383.3 C1929.6 404.2 1931.0 422.5 1930.0 480.1 M1928.3 381.7 C1928.8 418.2 1927.8 454.2 1930.3 479.0" fill="none" stroke="#046b5e" stroke-width="2.2" stroke-linecap="round" stroke-linejoin="round" />
<path d="M1915.9 460.7 C1921.0 467.2 1925.5 474.5 1929.2 482.0 M1915.5 460.3 C1918.8 466.3 1922.0 471.0 1929.4 482.2 M1929.3 481.4 C1932.5 476.4 1937.3 470.5 1942.1 461.0 M1929.2 482.4 C1932.3 476.1 1936.0 470.7 1942.0 460.7 M1942.9 461.7 C1937.9 462.9 1932.8 467.2 1928.2 469.9 M1928.1 468.8 C1924.7 466.0 1921.2 463.7 1915.1 460.0" fill="none" stroke="#046b5e" stroke-width="2.6" stroke-linecap="round" stroke-linejoin="round" />
<path d="M2021.5 382.9 C2022.4 393.6 2020.2 404.1 2020.1 414.6 M2021.3 382.0 C2021.1 392.4 2020.8 402.4 2021.6 415.4 M2022.4 416.7 Q2019.8 437.8 2043.4 439.4 M2020.6 416.2 Q2022.3 439.0 2044.5 437.9 M2044.5 438.7 C2314.9 433.0 2586.6 436.7 2865.3 438.2 M2042.0 437.9 C2336.8 437.3 2630.3 435.5 2863.7 436.9" fill="none" stroke="#046b5e" stroke-width="2.5" stroke-linecap="round" stroke-linejoin="round" />
<path d="M2846.2 450.1 C2852.3 446.1 2860.7 442.2 2866.4 438.9 M2845.5 451.0 C2851.8 447.0 2858.1 443.2 2865.8 437.9 M2866.7 438.9 C2858.4 433.5 2850.3 428.7 2845.7 425.5 M2866.1 438.0 C2862.0 435.0 2857.7 432.7 2846.1 425.7 M2845.5 425.8 C2848.6 428.4 2849.6 431.2 2854.2 438.8 M2853.4 437.5 C2852.5 440.6 2850.1 444.0 2845.0 451.2" fill="none" stroke="#046b5e" stroke-width="2.5" stroke-linecap="round" stroke-linejoin="round" />
<path d="M1056.7 836.1 C1057.0 775.5 1056.9 716.2 1056.5 567.7 M1058.8 835.4 C1059.2 749.6 1059.5 661.4 1057.6 569.9 M1057.2 570.5 Q1059.2 543.9 1081.2 545.7 M1057.3 567.8 Q1059.0 544.8 1082.9 543.9 M1080.7 545.8 C1159.0 547.0 1230.7 545.0 1351.1 545.0 M1082.1 545.0 C1172.5 544.1 1262.0 544.3 1350.7 546.1" fill="none" stroke="#046b5e" stroke-width="2.1" stroke-linecap="round" stroke-linejoin="round" />
<path d="M1334.5 558.7 C1342.0 553.5 1349.3 548.9 1353.9 546.2 M1333.9 558.7 C1337.4 555.8 1341.9 553.1 1354.4 546.3 M1353.8 546.2 C1347.0 542.7 1340.6 537.0 1334.5 533.7 M1354.2 546.3 C1347.1 541.4 1339.8 536.6 1333.5 533.2 M1333.9 532.8 C1336.2 536.1 1336.8 538.6 1342.1 546.1 M1342.4 546.5 C1340.7 548.7 1337.7 553.6 1333.2 558.6" fill="none" stroke="#046b5e" stroke-width="2.5" stroke-linecap="round" stroke-linejoin="round" />
<path d="M1680.6 545.1 C1699.2 546.3 1713.5 547.9 1757.2 548.7 M1681.2 546.8 C1706.0 546.3 1730.6 546.7 1757.2 546.2" fill="none" stroke="#046b5e" stroke-width="2.2" stroke-linecap="round" stroke-linejoin="round" />
<path d="M1739.0 560.0 C1746.6 555.3 1755.4 549.4 1760.4 546.6 M1738.7 560.7 C1743.3 557.2 1747.9 555.3 1759.6 547.4 M1759.5 547.0 C1754.7 543.8 1747.8 540.5 1739.4 533.9 M1760.0 546.6 C1755.2 544.1 1750.5 540.8 1738.9 533.6 M1739.6 534.1 C1741.5 537.7 1745.8 543.6 1747.7 546.7 M1747.7 547.2 C1745.8 549.9 1742.7 554.7 1739.6 561.0" fill="none" stroke="#046b5e" stroke-width="2.6" stroke-linecap="round" stroke-linejoin="round" />
<path d="M2095.7 548.4 C2123.7 547.8 2152.7 546.0 2236.6 547.2 M2096.4 548.6 C2140.9 546.9 2187.9 547.5 2236.5 546.5" fill="none" stroke="#046b5e" stroke-width="2.0" stroke-linecap="round" stroke-linejoin="round" />
<path d="M2219.3 559.5 C2226.0 555.3 2230.7 552.6 2239.8 546.9 M2219.6 559.2 C2225.0 555.5 2230.4 552.0 2238.7 547.2 M2239.4 546.6 C2234.1 544.2 2231.0 541.6 2218.8 535.2 M2239.3 546.8 C2232.8 543.0 2227.3 539.7 2219.3 534.6 M2219.3 534.2 C2221.8 538.6 2224.0 542.0 2227.6 546.4 M2226.6 547.0 C2224.9 551.4 2222.8 555.9 2220.1 558.4" fill="none" stroke="#046b5e" stroke-width="2.4" stroke-linecap="round" stroke-linejoin="round" />
<path d="M2306.5 546.8 C2359.8 544.8 2409.3 545.3 2471.9 547.5 M2307.8 545.7 C2349.4 546.8 2389.2 546.9 2471.4 547.4" fill="none" stroke="#046b5e" stroke-width="2.0" stroke-linecap="round" stroke-linejoin="round" />
<path d="M2454.8 559.9 C2462.5 555.0 2470.1 550.6 2474.3 547.0 M2454.7 559.7 C2461.0 554.7 2467.5 550.7 2473.8 547.5 M2474.3 547.5 C2469.2 543.6 2465.6 542.0 2455.3 533.9 M2474.1 546.7 C2469.4 544.1 2465.0 541.8 2454.3 534.8 M2455.2 535.5 C2457.2 539.3 2461.2 543.6 2462.0 546.2 M2462.5 547.0 C2459.1 552.7 2456.6 556.1 2453.6 559.2" fill="none" stroke="#046b5e" stroke-width="2.4" stroke-linecap="round" stroke-linejoin="round" />
<path d="M2273.4 579.8 C2272.7 647.6 2273.0 716.7 2273.1 826.5 M2272.1 581.6 C2273.4 679.2 2272.1 775.9 2273.4 825.3" fill="none" stroke="#046b5e" stroke-width="2.6" stroke-linecap="round" stroke-linejoin="round" />
<path d="M2259.9 808.5 C2263.4 814.5 2267.5 821.0 2272.2 829.6 M2259.5 807.6 C2262.4 812.8 2266.0 818.3 2272.9 829.2 M2273.9 829.6 C2276.2 823.3 2278.6 820.0 2285.8 807.9 M2273.1 828.8 C2276.8 822.8 2280.6 816.4 2286.2 808.0 M2286.0 808.6 C2283.1 810.5 2279.3 812.9 2272.3 815.9 M2272.4 816.3 C2270.6 814.9 2266.4 812.3 2259.1 807.1" fill="none" stroke="#046b5e" stroke-width="2.6" stroke-linecap="round" stroke-linejoin="round" />
<path d="M1929.7 609.0 C1930.0 672.7 1930.1 734.1 1927.4 831.7 M1930.3 609.2 C1929.1 654.0 1929.3 699.8 1927.3 831.8" fill="none" stroke="#046b5e" stroke-width="2.2" stroke-linecap="round" stroke-linejoin="round" />
<path d="M1916.0 815.9 C1920.1 823.1 1923.4 827.9 1928.0 835.3 M1915.5 816.9 C1920.2 822.9 1923.8 829.7 1928.1 836.2 M1927.9 835.3 C1932.0 830.1 1935.1 825.7 1940.3 816.6 M1927.6 836.3 C1931.0 831.5 1934.0 826.2 1940.5 816.2 M1939.6 817.4 C1937.2 819.3 1932.3 821.8 1928.4 824.3 M1927.5 824.4 C1923.4 821.8 1920.3 818.8 1915.8 816.1" fill="none" stroke="#046b5e" stroke-width="2.4" stroke-linecap="round" stroke-linejoin="round" />
<path d="M2638.8 604.5 C2639.1 617.1 2640.3 627.8 2639.8 642.3 M2640.4 604.5 C2639.9 616.8 2640.1 630.2 2640.0 642.0 M2639.8 643.2 Q2639.5 658.7 2658.7 661.3 M2640.7 642.3 Q2640.8 659.4 2658.3 658.8 M2657.5 658.1 C2705.0 659.8 2749.1 659.1 2862.5 659.8 M2657.8 660.8 C2701.2 661.6 2745.8 662.2 2862.1 661.6" fill="none" stroke="#046b5e" stroke-width="2.0" stroke-linecap="round" stroke-linejoin="round" />
<path d="M2844.7 673.3 C2849.8 670.4 2853.9 668.6 2866.6 660.8 M2845.5 673.7 C2851.5 670.8 2856.6 666.6 2865.8 661.4 M2865.7 660.9 C2857.6 657.1 2851.5 650.9 2845.9 647.7 M2866.4 661.4 C2858.6 655.8 2850.9 651.8 2845.6 647.8 M2845.1 647.7 C2847.3 651.6 2850.3 654.2 2854.3 661.7 M2854.8 661.3 C2851.0 665.3 2848.0 670.0 2845.6 673.8" fill="none" stroke="#046b5e" stroke-width="2.2" stroke-linecap="round" stroke-linejoin="round" />
<path d="M1058.2 1140.1 C1060.0 1083.5 1058.2 1029.8 1058.1 957.2 M1058.9 1141.4 C1058.9 1085.1 1059.1 1027.1 1059.1 958.3" fill="none" stroke="#046b5e" stroke-width="1.9" stroke-linecap="round" stroke-linejoin="round" />
<path d="M1070.7 972.7 C1068.1 968.0 1064.3 963.5 1058.4 954.5 M1071.0 972.9 C1067.7 968.3 1065.0 964.0 1059.0 953.6 M1059.7 953.4 C1054.7 959.1 1051.7 965.8 1047.2 972.2 M1059.3 953.7 C1054.5 960.5 1050.2 967.2 1047.4 972.7 M1047.9 972.0 C1049.8 970.1 1053.5 969.4 1059.5 964.2 M1059.8 964.2 C1062.3 967.6 1066.5 968.6 1070.6 973.1" fill="none" stroke="#046b5e" stroke-width="2.1" stroke-linecap="round" stroke-linejoin="round" />
<path d="M1512.1 952.5 C1513.2 966.9 1517.3 1008.8 1518.8 1039.3 C1520.2 1069.8 1520.5 1119.5 1520.8 1135.6 M1512.8 951.8 C1513.4 966.7 1515.2 1010.6 1516.7 1041.4 C1518.2 1072.2 1520.9 1120.8 1521.7 1136.7" fill="none" stroke="#046b5e" stroke-width="1.9" stroke-linecap="round" stroke-linejoin="round" />
<path d="M1508.8 1122.3 C1513.1 1126.6 1514.8 1132.4 1521.2 1140.1 M1509.7 1122.4 C1512.9 1127.6 1515.7 1133.2 1520.9 1141.3 M1521.1 1140.4 C1523.2 1135.9 1526.6 1131.6 1532.6 1123.3 M1521.2 1140.9 C1524.7 1134.3 1528.5 1128.2 1532.6 1122.8 M1532.1 1123.1 C1528.4 1125.5 1525.1 1128.4 1520.1 1129.7 M1520.7 1130.5 C1517.8 1127.2 1514.3 1125.4 1508.5 1121.7" fill="none" stroke="#046b5e" stroke-width="2.1" stroke-linecap="round" stroke-linejoin="round" />
<path d="M1928.7 1143.2 C1928.0 1084.7 1928.8 1025.7 1930.6 956.8 M1929.6 1142.5 C1928.8 1098.1 1928.9 1053.0 1929.2 958.2" fill="none" stroke="#046b5e" stroke-width="1.9" stroke-linecap="round" stroke-linejoin="round" />
<path d="M1941.3 973.0 C1938.7 966.4 1934.6 961.4 1930.9 954.7 M1941.3 972.5 C1938.6 968.0 1935.7 963.1 1929.9 954.0 M1929.2 953.7 C1927.2 957.7 1924.8 963.1 1918.4 973.0 M1929.6 954.0 C1927.6 957.8 1925.0 961.4 1917.9 972.5 M1918.6 972.1 C1922.6 969.9 1927.9 966.6 1930.1 965.8 M1929.8 964.8 C1933.8 968.2 1939.0 970.1 1942.4 971.8" fill="none" stroke="#046b5e" stroke-width="2.1" stroke-linecap="round" stroke-linejoin="round" />
<path d="M1356.3 1201.0 C1346.8 1201.5 1321.5 1203.2 1299.6 1203.7 C1277.7 1204.3 1237.4 1204.2 1225.0 1204.3 M1356.1 1200.2 C1346.9 1200.7 1322.8 1202.4 1300.5 1203.3 C1278.2 1204.1 1235.6 1204.8 1222.6 1205.1" fill="none" stroke="#046b5e" stroke-width="1.9" stroke-linecap="round" stroke-linejoin="round" />
<path d="M1238.9 1193.4 C1233.7 1196.8 1228.9 1200.8 1219.7 1204.7 M1239.1 1193.6 C1231.3 1197.9 1224.6 1202.2 1219.9 1204.8 M1219.5 1204.7 C1226.0 1209.1 1232.4 1212.3 1237.8 1215.9 M1219.7 1205.4 C1226.7 1208.6 1232.5 1213.0 1238.9 1216.6 M1238.3 1216.4 C1236.5 1213.3 1234.0 1208.8 1230.9 1205.4 M1230.3 1204.8 C1233.7 1200.7 1235.3 1196.5 1238.8 1194.1" fill="none" stroke="#046b5e" stroke-width="2.1" stroke-linecap="round" stroke-linejoin="round" />
<path d="M1678.9 1203.3 C1685.8 1202.9 1706.0 1201.1 1720.4 1200.8 C1734.8 1200.6 1757.8 1201.6 1765.3 1201.8 M1679.2 1205.4 C1685.8 1204.7 1704.6 1202.4 1718.7 1201.6 C1732.9 1200.8 1756.4 1200.9 1763.9 1200.7" fill="none" stroke="#046b5e" stroke-width="1.9" stroke-linecap="round" stroke-linejoin="round" />
<path d="M1749.6 1213.4 C1754.2 1210.6 1759.8 1207.3 1768.6 1202.6 M1750.8 1213.6 C1757.4 1209.5 1764.4 1204.8 1768.7 1201.6 M1768.3 1201.7 C1760.8 1197.7 1753.9 1193.3 1749.9 1189.8 M1769.4 1201.8 C1763.0 1198.2 1757.9 1195.5 1750.1 1190.7 M1750.2 1189.5 C1752.8 1194.0 1755.2 1196.8 1758.8 1202.7 M1758.4 1201.4 C1754.1 1206.1 1751.3 1210.6 1750.1 1214.1" fill="none" stroke="#046b5e" stroke-width="2.1" stroke-linecap="round" stroke-linejoin="round" />
<path d="M2271.9 953.8 C2271.3 972.0 2274.4 993.0 2273.9 1027.6 M2273.9 951.8 C2273.7 978.9 2274.1 1005.9 2273.2 1027.5 M2272.7 1027.6 Q2273.4 1052.8 2296.6 1052.3 M2272.6 1027.4 Q2274.1 1051.5 2295.9 1051.5 M2297.2 1052.6 C2492.9 1047.6 2689.9 1047.9 2862.7 1048.1 M2296.4 1052.7 C2466.7 1052.7 2636.4 1052.5 2862.9 1050.9" fill="none" stroke="#046b5e" stroke-width="1.9" stroke-linecap="round" stroke-linejoin="round" />
<path d="M2845.0 1062.3 C2850.9 1060.4 2855.2 1055.8 2865.7 1050.9 M2845.8 1063.1 C2850.7 1059.9 2855.0 1056.9 2865.6 1050.3 M2865.8 1049.8 C2858.6 1046.0 2852.3 1041.5 2844.8 1037.5 M2866.0 1050.5 C2860.4 1046.1 2854.5 1043.0 2845.6 1037.6 M2845.2 1037.9 C2847.9 1040.9 2850.1 1043.5 2854.0 1050.9 M2853.6 1050.6 C2852.2 1052.8 2851.2 1054.9 2845.3 1063.0" fill="none" stroke="#046b5e" stroke-width="2.1" stroke-linecap="round" stroke-linejoin="round" />
<path d="M3023.0 1120.4 C3023.8 1134.3 3023.7 1146.0 3024.0 1179.7 M3023.4 1121.4 C3022.5 1134.0 3022.8 1148.1 3023.1 1179.5 M3021.8 1180.3 Q3022.2 1203.3 3000.0 1203.6 M3022.2 1179.5 Q3022.8 1201.7 2998.6 1202.5 M2999.8 1201.7 C2702.5 1206.5 2408.9 1204.2 2092.5 1204.7 M2999.5 1202.7 C2707.2 1203.2 2415.5 1203.6 2093.9 1203.6" fill="none" stroke="#046b5e" stroke-width="1.9" stroke-linecap="round" stroke-linejoin="round" />
<path d="M2110.5 1191.0 C2104.8 1194.2 2099.3 1197.6 2091.7 1202.6 M2109.9 1191.4 C2102.7 1195.2 2095.8 1199.8 2090.9 1203.4 M2090.5 1202.8 C2095.2 1206.7 2100.2 1208.8 2109.3 1215.3 M2090.6 1202.9 C2097.7 1207.6 2104.9 1211.6 2110.0 1215.1 M2109.4 1214.6 C2107.7 1212.6 2106.6 1210.8 2102.9 1203.9 M2102.4 1203.9 C2103.3 1199.6 2106.0 1196.7 2109.1 1192.2" fill="none" stroke="#046b5e" stroke-width="2.1" stroke-linecap="round" stroke-linejoin="round" />
<path d="M1185.0 260.4 C1184.8 286.6 1188.7 318.7 1190.1 379.6 M1184.2 260.0 C1186.9 304.3 1185.4 347.0 1188.9 381.1 M1162.8 256.9 C1165.5 284.0 1163.5 313.3 1164.8 382.6 M1163.0 258.9 C1164.1 288.3 1164.9 318.9 1167.3 381.1 M1142.6 258.5 C1139.4 291.3 1144.8 328.9 1144.4 379.1 M1140.4 260.0 C1139.7 296.1 1140.7 333.1 1142.1 382.2 M1119.3 261.5 C1119.4 291.4 1122.1 323.2 1119.2 382.3 M1117.0 258.9 C1116.7 290.6 1117.5 320.5 1120.5 380.7 M1093.3 258.9 C1093.8 290.2 1096.1 315.9 1097.0 383.6 M1094.0 258.4 C1095.0 283.8 1094.8 308.1 1097.6 381.7 M1070.3 260.7 C1072.0 286.7 1072.5 309.2 1075.8 378.7 M1072.4 259.4 C1071.0 308.2 1072.2 356.2 1074.9 382.2 M1050.2 259.4 C1047.1 300.3 1050.4 339.9 1054.7 383.3 M1048.6 258.8 C1049.2 284.7 1051.6 310.3 1050.9 381.9 M1023.8 257.9 C1030.7 300.0 1031.6 338.7 1028.7 381.2 M1025.8 258.7 C1027.6 305.0 1028.3 349.2 1028.8 381.8 M1003.6 257.3 C1004.5 284.1 1005.2 313.4 1006.4 380.4 M1004.5 258.5 C1005.0 296.7 1004.8 336.5 1006.5 380.3 M981.5 258.6 C983.4 285.3 986.0 313.2 983.3 380.9 M979.0 259.6 C980.7 289.2 980.8 318.1 984.8 381.7 M955.9 257.3 C959.1 303.6 957.9 348.6 961.2 383.2 M956.9 260.0 C960.7 305.3 960.5 351.6 960.8 380.3 M934.6 257.7 C934.9 289.3 936.9 324.2 936.0 383.0 M935.2 260.2 C937.3 303.6 936.4 350.7 937.5 381.8" fill="none" stroke="#fac9c8" stroke-width="1.4" stroke-linecap="round" stroke-linejoin="round" />
<path d="M921.2 264.3 C988.9 261.5 1056.9 259.8 1201.4 259.9 M920.2 261.0 C1029.6 261.4 1137.5 260.7 1199.4 260.9 M1200.0 263.9 C1201.0 286.0 1197.3 309.9 1197.3 378.1 M1199.0 260.9 C1199.2 293.6 1200.4 325.0 1198.0 377.5 M1201.5 380.4 C1126.7 382.0 1052.2 377.5 919.9 378.5 M1199.1 379.2 C1103.7 375.9 1011.8 378.1 918.7 376.8 M920.4 379.4 C921.0 332.9 917.1 294.7 922.5 263.8 M919.4 378.2 C919.8 344.9 920.2 312.6 919.3 263.0" fill="none" stroke="#c04e4e" stroke-width="2.3" stroke-linecap="round" stroke-linejoin="round" />
<text x="1059.5" y="330.0" font-size="28" fill="#000" text-anchor="middle" letter-spacing="1.6">Input</text>
<path d="M2694.5 261.6 C2694.7 287.2 2697.3 316.0 2697.9 380.6 M2695.2 260.5 C2696.5 305.9 2695.7 352.3 2697.1 381.2 M2671.0 262.3 C2677.5 293.9 2673.6 330.6 2676.6 381.1 M2671.7 260.9 C2671.7 303.7 2673.9 346.2 2676.1 381.0 M2651.4 259.1 C2654.0 287.4 2653.5 321.3 2650.5 380.0 M2648.6 258.9 C2651.0 302.2 2651.6 341.0 2651.7 380.7 M2626.3 260.2 C2627.8 293.4 2628.4 326.3 2627.0 380.4 M2625.2 259.5 C2627.6 285.7 2628.9 313.9 2629.3 382.3 M2605.9 262.7 C2602.8 306.5 2606.1 347.6 2604.7 380.2 M2603.4 260.4 C2604.1 301.5 2604.0 344.2 2605.3 381.3 M2581.3 259.0 C2581.5 301.6 2583.8 338.5 2584.0 381.8 M2581.6 259.1 C2583.1 293.9 2583.3 324.1 2584.4 381.3 M2556.5 257.7 C2560.1 297.7 2560.4 337.2 2563.3 382.1 M2558.1 259.9 C2557.5 293.6 2559.5 327.7 2562.3 381.4 M2533.5 261.8 C2537.7 293.8 2539.2 330.4 2537.7 382.3 M2534.9 259.6 C2534.9 306.7 2537.9 355.8 2539.5 383.2 M2513.9 261.7 C2513.0 302.8 2514.8 340.8 2517.7 379.3 M2513.3 260.4 C2512.0 297.4 2513.1 335.2 2516.4 381.5 M2492.0 260.7 C2489.4 290.2 2489.8 319.9 2494.0 383.6 M2489.0 259.6 C2489.5 304.8 2492.9 350.7 2493.0 382.8 M2465.2 258.2 C2469.5 302.4 2472.2 341.7 2472.1 384.3 M2466.1 259.4 C2469.2 291.5 2468.7 324.0 2469.8 381.9 M2444.2 258.6 C2444.4 300.1 2443.9 344.3 2447.1 384.5 M2445.0 258.9 C2444.1 300.5 2446.1 340.2 2447.3 383.2" fill="none" stroke="#fac9c8" stroke-width="1.4" stroke-linecap="round" stroke-linejoin="round" />
<path d="M2433.6 263.1 C2534.8 263.2 2639.5 260.0 2708.3 261.8 M2431.5 262.9 C2526.1 262.2 2621.5 264.4 2709.0 261.8 M2707.7 261.0 C2707.9 288.2 2709.5 312.2 2708.8 380.0 M2707.9 261.7 C2706.8 300.2 2707.9 336.9 2709.2 379.9 M2710.6 377.0 C2624.6 378.2 2545.2 379.7 2430.5 378.5 M2707.6 378.8 C2603.3 378.3 2499.2 378.6 2430.5 379.7 M2430.8 378.3 C2432.7 347.8 2432.1 311.0 2431.9 264.3 M2430.8 379.4 C2430.5 349.6 2431.3 320.1 2430.6 263.6" fill="none" stroke="#c04e4e" stroke-width="2.3" stroke-linecap="round" stroke-linejoin="round" />
<text x="2569.5" y="335.0" font-size="28" fill="#000" text-anchor="middle" letter-spacing="1.6">Output</text>
<clipPath id="pc922"><rect x="900" y="821" width="321" height="142"/></clipPath>
<path d="M921.4 837.0 C1014.9 836.3 1108.3 837.6 1199.1 835.5 M921.4 836.2 C979.2 837.9 1034.9 837.5 1197.6 836.9 M1199.6 839.2 C1199.3 867.2 1196.2 904.3 1197.2 953.1 M1198.3 835.7 C1196.8 867.1 1198.1 896.7 1197.2 954.2 M1197.4 951.3 C1117.9 956.4 1040.0 952.8 921.7 953.2 M1197.4 952.2 C1122.4 952.9 1049.5 953.4 922.2 951.9 M923.2 954.4 C919.4 912.6 923.3 875.2 920.4 834.5 M922.9 952.2 C922.2 926.3 923.0 897.8 922.2 836.7" fill="none" stroke="#9a72aa" stroke-width="2.2" stroke-linecap="round" stroke-linejoin="round" />
<text x="1059.5" y="905.0" font-size="28" fill="#000" text-anchor="middle" letter-spacing="1.2">Object</text>
<clipPath id="pc1792"><rect x="1770" y="821" width="322" height="142"/></clipPath>
<path d="M1794.3 836.6 C1872.8 834.6 1954.6 836.4 2067.8 838.0 M1791.1 835.8 C1855.4 836.7 1919.8 837.7 2068.5 838.2 M2067.8 838.7 C2069.1 861.8 2070.0 885.4 2066.0 953.7 M2068.1 836.0 C2068.1 861.6 2067.4 883.6 2068.5 953.6 M2069.9 953.9 C1966.5 953.1 1861.5 955.0 1791.8 950.4 M2066.8 952.0 C1986.8 953.5 1906.3 953.8 1791.4 952.9 M1794.2 952.9 C1790.7 918.0 1790.5 885.8 1789.6 836.5 M1792.3 953.7 C1791.4 927.4 1791.2 903.9 1791.2 835.7" fill="none" stroke="#9a72aa" stroke-width="2.2" stroke-linecap="round" stroke-linejoin="round" />
<text x="1930.0" y="905.0" font-size="28" fill="#000" text-anchor="middle" letter-spacing="1.2">Object</text>
<path d="M1361.0 844.5 C1364.8 839.8 1366.8 837.8 1367.6 837.3 M1361.1 857.0 C1364.5 851.0 1369.6 848.0 1380.4 837.8 M1361.9 868.6 C1370.1 860.5 1376.3 852.4 1392.0 838.2 M1363.8 883.3 C1372.9 867.1 1386.4 852.7 1404.5 838.6 M1364.0 892.1 C1378.3 876.6 1389.0 864.7 1415.1 836.8 M1378.5 891.0 C1388.5 878.2 1398.1 865.3 1427.7 837.5 M1389.1 892.2 C1399.6 880.1 1412.1 865.8 1437.9 836.4 M1399.5 890.3 C1415.2 876.7 1428.1 861.6 1448.3 837.6 M1413.1 892.9 C1422.8 876.9 1434.2 862.3 1461.0 838.7 M1422.1 892.7 C1433.0 878.7 1442.9 866.2 1471.6 836.0 M1436.2 890.2 C1450.3 870.2 1466.6 854.5 1484.0 834.9 M1444.4 890.7 C1459.5 877.2 1473.7 861.3 1496.7 837.3 M1458.3 889.2 C1466.6 878.4 1477.8 868.8 1507.0 838.7 M1469.5 892.2 C1488.8 868.0 1507.2 847.9 1518.3 837.9 M1482.6 889.2 C1495.6 870.3 1512.1 856.0 1529.0 836.7 M1494.0 890.3 C1508.1 876.3 1518.7 859.4 1539.6 838.7 M1504.7 891.7 C1514.1 879.0 1523.6 867.2 1551.9 837.8 M1516.0 891.4 C1524.4 881.1 1538.8 866.4 1563.0 838.4 M1528.9 892.9 C1545.3 867.5 1564.3 846.6 1577.9 838.8 M1537.9 891.7 C1554.2 876.1 1567.3 858.8 1587.5 836.4 M1549.8 891.3 C1562.7 872.8 1577.9 858.5 1597.2 835.1 M1560.1 890.2 C1574.8 874.2 1587.6 860.1 1612.3 836.5 M1574.9 889.8 C1586.1 879.6 1594.7 864.2 1621.6 838.2 M1584.7 890.9 C1603.3 870.9 1620.3 855.0 1634.4 839.0 M1595.6 892.3 C1614.0 868.6 1634.2 850.0 1646.3 835.7 M1606.5 890.1 C1625.4 869.8 1646.7 850.1 1658.5 835.1 M1618.8 889.1 C1629.7 876.9 1644.0 863.4 1669.0 836.1 M1631.6 890.5 C1640.0 877.8 1650.0 867.9 1678.5 834.9 M1642.8 890.9 C1654.5 877.0 1664.5 866.6 1681.1 849.0 M1655.5 891.9 C1662.7 883.7 1669.2 875.1 1681.1 862.1 M1665.2 891.7 C1671.0 886.2 1676.3 879.8 1680.9 874.4 M1677.0 891.7 C1679.1 890.3 1679.8 889.3 1679.7 886.8" fill="none" stroke="#ffe2c4" stroke-width="2.1" stroke-linecap="round" stroke-linejoin="round" />
<path d="M1379.1 829.5 C1477.4 831.8 1566.6 833.5 1654.2 829.1 M1653.9 832.2 C1654.8 832.8 1656.7 835.5 1659.4 836.1 C1662.2 836.7 1668.0 834.8 1670.3 835.7 C1672.6 836.7 1671.9 839.8 1673.1 841.8 C1674.4 843.8 1677.0 845.2 1677.7 847.6 C1678.4 850.1 1677.3 855.1 1677.2 856.6 M1681.7 860.6 C1681.8 880.9 1676.2 897.3 1677.7 930.2 M1678.5 928.2 C1678.7 929.5 1680.5 933.3 1679.3 935.5 C1678.0 937.6 1673.1 938.7 1671.0 941.1 C1668.9 943.4 1668.0 948.2 1666.7 949.6 C1665.3 951.0 1665.4 949.2 1663.1 949.5 C1660.8 949.9 1654.4 951.4 1652.7 951.7 M1650.7 956.9 C1560.4 955.8 1458.7 956.1 1383.2 953.1 M1379.9 953.1 C1378.9 952.8 1376.4 952.0 1374.4 950.9 C1372.3 949.9 1369.3 948.2 1367.6 946.7 C1365.8 945.1 1365.7 943.0 1363.9 941.7 C1362.1 940.3 1357.6 940.5 1356.8 938.7 C1356.0 937.0 1358.8 932.4 1359.2 931.1 M1357.6 925.5 C1358.0 905.3 1358.9 872.2 1353.4 858.9 M1356.9 859.0 C1357.6 857.4 1359.7 851.9 1360.6 849.3 C1361.5 846.8 1361.3 845.8 1362.5 843.7 C1363.7 841.7 1365.9 838.9 1367.9 836.9 C1369.8 835.0 1371.8 832.5 1374.3 832.0 C1376.8 831.5 1381.5 833.8 1383.0 834.1" fill="none" stroke="#dd9a00" stroke-width="2.3" stroke-linecap="round" stroke-linejoin="round" />
<path d="M1356.7 894.1 C1473.0 888.6 1585.4 890.3 1676.4 891.3" fill="none" stroke="#dd9a00" stroke-width="2.3" stroke-linecap="round" stroke-linejoin="round" />
<g transform="translate(1366.3 843.5)"><rect x="0.6" y="0.6" width="19.4" height="19" rx="2" fill="#d9e0ea" stroke="#9ba8ba" stroke-width="1.2"/><rect x="1.8" y="1.8" width="17" height="6.5" rx="1.2" fill="#eef2f7" stroke="none"/><rect x="4.3" y="8" width="12" height="3.5" fill="#1a1a1a"/></g>
<text x="1517.5" y="873.5" font-size="28" fill="#000" text-anchor="middle" letter-spacing="1.5">1.3</text>
<text x="1515.5" y="931.5" font-size="26" fill="#5c5c5c" text-anchor="middle" letter-spacing="0">Row 1</text>
<path d="M906.1 1152.9 C905.1 1151.8 908.1 1149.9 911.1 1145.6 M903.8 1165.8 C910.7 1160.5 914.6 1155.7 923.6 1146.8 M905.3 1178.5 C917.4 1165.6 927.6 1151.2 934.8 1146.3 M906.2 1193.1 C920.6 1174.4 936.4 1152.7 944.7 1145.3 M909.3 1198.2 C926.7 1177.8 945.3 1157.2 956.7 1147.3 M920.2 1198.8 C930.2 1184.5 947.1 1170.0 968.6 1146.1 M930.9 1199.1 C944.9 1187.5 956.7 1173.0 981.8 1147.1 M944.7 1202.2 C954.6 1186.6 963.9 1177.3 992.3 1144.4 M956.9 1199.5 C971.6 1179.3 991.6 1156.1 1002.5 1146.5 M968.5 1201.7 C980.5 1184.1 992.9 1169.1 1015.3 1144.1 M978.8 1200.1 C985.7 1189.3 996.7 1177.9 1027.9 1146.0 M987.4 1200.1 C1005.4 1184.7 1015.9 1169.3 1039.0 1145.2 M1001.1 1199.0 C1016.9 1182.3 1034.4 1162.7 1049.1 1144.6 M1014.7 1200.4 C1019.7 1187.2 1029.4 1178.4 1061.8 1148.0 M1022.6 1197.9 C1036.6 1185.5 1048.6 1173.8 1072.0 1147.4 M1036.2 1201.6 C1048.6 1184.3 1064.3 1167.7 1085.8 1147.0 M1049.2 1201.9 C1059.5 1184.0 1070.8 1174.3 1094.0 1145.1 M1057.1 1199.4 C1067.1 1188.2 1079.1 1178.0 1105.7 1146.2 M1069.4 1201.4 C1079.3 1187.6 1092.0 1174.5 1119.3 1146.2 M1080.8 1198.7 C1098.0 1180.1 1115.0 1160.7 1131.5 1145.6 M1095.1 1201.7 C1103.3 1190.2 1112.5 1177.7 1144.2 1144.7 M1106.5 1200.5 C1114.8 1187.4 1125.3 1176.7 1152.2 1146.4 M1115.2 1199.1 C1130.6 1181.7 1146.1 1165.6 1166.2 1147.4 M1129.8 1201.3 C1140.9 1182.7 1154.7 1168.5 1176.8 1148.1 M1142.0 1201.1 C1153.8 1187.4 1163.7 1172.1 1186.6 1146.8 M1151.8 1198.1 C1169.9 1177.0 1188.7 1159.1 1201.2 1147.6 M1164.3 1200.3 C1176.5 1182.7 1190.9 1166.6 1210.0 1144.1 M1175.1 1201.6 C1188.3 1183.0 1200.5 1171.0 1222.4 1148.0 M1186.0 1200.9 C1199.0 1187.2 1208.9 1172.8 1222.2 1160.0 M1196.5 1198.8 C1207.9 1190.5 1215.5 1177.9 1222.2 1172.4 M1208.8 1200.3 C1212.8 1196.1 1216.8 1191.8 1222.5 1187.0" fill="none" stroke="#ffe2c4" stroke-width="2.1" stroke-linecap="round" stroke-linejoin="round" />
<path d="M922.0 1143.2 C995.4 1136.5 1066.0 1140.6 1192.9 1138.7 M1196.4 1140.2 C1197.6 1140.5 1201.7 1140.6 1203.7 1142.0 C1205.7 1143.5 1206.4 1146.8 1208.4 1148.7 C1210.5 1150.7 1214.1 1151.8 1216.1 1153.6 C1218.0 1155.3 1219.4 1156.9 1220.2 1159.1 C1221.1 1161.3 1221.0 1165.4 1221.2 1166.6 M1219.6 1163.9 C1220.5 1191.8 1221.2 1209.3 1215.1 1236.9 M1218.7 1239.7 C1218.6 1240.7 1218.7 1243.4 1218.1 1245.5 C1217.4 1247.6 1216.3 1250.3 1214.9 1252.4 C1213.6 1254.4 1212.0 1256.5 1210.0 1257.7 C1208.0 1258.9 1205.5 1258.8 1202.7 1259.5 C1199.9 1260.2 1194.7 1261.3 1193.1 1261.7 M1195.6 1262.2 C1092.4 1260.5 992.9 1259.7 921.7 1260.2 M922.5 1260.5 C921.2 1260.5 916.9 1261.3 914.5 1260.9 C912.1 1260.6 909.8 1259.5 908.3 1258.1 C906.7 1256.8 906.3 1254.8 905.1 1252.7 C903.9 1250.7 902.1 1248.5 901.1 1246.0 C900.1 1243.5 899.3 1239.2 899.0 1237.8 M900.7 1241.9 C900.7 1214.1 902.0 1187.6 898.9 1165.4 M901.2 1167.1 C900.9 1166.1 898.6 1163.4 899.6 1160.8 C900.6 1158.3 904.9 1154.1 907.0 1151.9 C909.1 1149.6 910.9 1149.0 912.4 1147.2 C913.9 1145.4 914.5 1141.9 916.0 1141.1 C917.5 1140.3 920.7 1142.2 921.6 1142.5" fill="none" stroke="#dd9a00" stroke-width="2.3" stroke-linecap="round" stroke-linejoin="round" />
<path d="M899.6 1203.5 C1010.3 1195.1 1119.6 1195.3 1219.4 1199.5" fill="none" stroke="#dd9a00" stroke-width="2.3" stroke-linecap="round" stroke-linejoin="round" />
<g transform="translate(909.3 1152.5)"><rect x="0.6" y="0.6" width="19.4" height="19" rx="2" fill="#d9e0ea" stroke="#9ba8ba" stroke-width="1.2"/><rect x="1.8" y="1.8" width="17" height="6.5" rx="1.2" fill="#eef2f7" stroke="none"/><rect x="4.3" y="8" width="12" height="3.5" fill="#1a1a1a"/></g>
<text x="1059.5" y="1182.5" font-size="28" fill="#000" text-anchor="middle" letter-spacing="1.5">1.1</text>
<text x="1057.5" y="1240.5" font-size="26" fill="#5c5c5c" text-anchor="middle" letter-spacing="0">Row 1</text>
<path d="M1363.2 1152.4 C1363.0 1150.3 1365.5 1147.2 1368.8 1145.1 M1363.3 1164.2 C1368.9 1157.3 1375.1 1153.1 1379.2 1146.4 M1361.8 1179.1 C1369.4 1168.8 1378.8 1159.4 1391.7 1146.3 M1361.0 1191.2 C1373.8 1176.8 1383.5 1166.8 1401.6 1144.5 M1365.9 1199.0 C1377.6 1186.3 1390.4 1174.5 1412.9 1148.1 M1378.0 1199.7 C1392.6 1182.1 1408.4 1165.4 1427.3 1145.7 M1388.8 1200.3 C1403.8 1185.6 1413.6 1171.5 1435.1 1144.0 M1398.7 1200.0 C1419.2 1178.2 1433.9 1158.6 1446.8 1145.2 M1413.3 1200.4 C1427.4 1184.2 1438.9 1166.8 1460.3 1144.3 M1423.3 1201.3 C1440.7 1179.5 1458.6 1157.2 1470.6 1146.0 M1435.3 1201.1 C1453.3 1180.6 1469.7 1162.9 1483.6 1144.6 M1444.4 1198.2 C1456.7 1186.9 1466.1 1177.7 1494.8 1144.4 M1457.8 1200.2 C1474.5 1183.0 1491.2 1162.2 1507.9 1144.3 M1469.9 1199.0 C1482.2 1187.4 1492.6 1177.5 1518.0 1147.2 M1481.9 1201.9 C1496.2 1183.0 1510.0 1167.1 1529.3 1147.2 M1491.2 1201.0 C1501.1 1188.4 1510.9 1178.4 1541.1 1146.8 M1502.6 1200.0 C1516.5 1183.4 1533.5 1168.8 1554.0 1144.5 M1514.3 1197.9 C1533.5 1184.3 1546.9 1162.5 1565.5 1146.7 M1526.3 1201.2 C1538.3 1187.5 1547.3 1178.7 1576.5 1146.1 M1539.1 1200.4 C1550.3 1187.7 1562.3 1174.9 1587.3 1147.5 M1552.1 1201.2 C1565.7 1183.1 1578.7 1164.5 1599.9 1144.9 M1561.9 1198.9 C1576.6 1183.1 1594.8 1164.0 1610.0 1145.8 M1574.9 1201.4 C1588.2 1186.2 1600.9 1168.4 1623.0 1145.2 M1585.4 1199.4 C1600.7 1178.9 1620.5 1162.1 1632.4 1147.8 M1594.8 1201.7 C1613.6 1177.6 1636.6 1158.0 1646.9 1147.5 M1607.9 1200.0 C1621.0 1186.3 1631.8 1172.9 1656.0 1144.1 M1619.7 1201.9 C1636.0 1182.8 1652.0 1164.0 1667.8 1146.2 M1629.6 1202.0 C1646.3 1181.0 1663.2 1165.6 1681.8 1146.2 M1642.8 1200.2 C1651.6 1188.7 1661.0 1177.5 1681.1 1158.6 M1655.2 1199.4 C1663.0 1191.3 1670.2 1182.9 1682.2 1171.3 M1666.0 1199.7 C1669.3 1195.8 1672.3 1192.0 1679.9 1184.5 M1679.2 1201.0 C1679.3 1200.0 1680.7 1199.3 1680.8 1196.8" fill="none" stroke="#ffe2c4" stroke-width="2.1" stroke-linecap="round" stroke-linejoin="round" />
<path d="M1382.0 1137.9 C1441.5 1137.2 1497.1 1140.6 1656.8 1143.1 M1652.2 1142.8 C1653.6 1143.0 1657.5 1142.8 1660.1 1143.8 C1662.7 1144.8 1665.5 1147.7 1667.7 1148.9 C1669.9 1150.0 1671.8 1148.8 1673.2 1150.8 C1674.5 1152.8 1675.2 1158.5 1675.9 1160.9 C1676.6 1163.2 1677.0 1164.1 1677.2 1164.7 M1674.5 1164.6 C1680.6 1188.1 1680.3 1211.7 1674.6 1234.3 M1676.4 1237.0 C1676.2 1238.2 1676.1 1242.2 1675.2 1244.4 C1674.4 1246.5 1672.7 1247.3 1671.5 1249.7 C1670.3 1252.1 1670.2 1257.2 1668.2 1258.7 C1666.3 1260.2 1661.9 1258.6 1659.7 1258.8 C1657.5 1259.0 1655.9 1259.7 1655.1 1259.9 M1656.4 1262.1 C1591.9 1262.1 1525.6 1265.9 1380.1 1264.7 M1379.0 1261.7 C1378.2 1261.2 1376.2 1259.4 1373.8 1259.1 C1371.4 1258.8 1366.4 1260.3 1364.8 1259.6 C1363.1 1258.8 1364.8 1256.8 1363.8 1254.6 C1362.7 1252.4 1359.4 1249.4 1358.4 1246.6 C1357.4 1243.8 1357.7 1239.3 1357.5 1237.9 M1358.5 1234.2 C1354.6 1217.9 1358.5 1204.1 1355.2 1168.3 M1357.1 1165.0 C1357.2 1163.5 1357.3 1158.7 1357.6 1156.1 C1358.0 1153.5 1357.5 1150.9 1359.4 1149.6 C1361.3 1148.3 1366.8 1149.2 1369.2 1148.5 C1371.6 1147.8 1371.8 1146.3 1373.8 1145.4 C1375.8 1144.4 1380.0 1143.3 1381.2 1142.9" fill="none" stroke="#dd9a00" stroke-width="2.3" stroke-linecap="round" stroke-linejoin="round" />
<path d="M1356.4 1202.9 C1427.0 1196.9 1497.0 1195.9 1677.6 1202.2" fill="none" stroke="#dd9a00" stroke-width="2.3" stroke-linecap="round" stroke-linejoin="round" />
<g transform="translate(1366.3 1152.5)"><rect x="0.6" y="0.6" width="19.4" height="19" rx="2" fill="#d9e0ea" stroke="#9ba8ba" stroke-width="1.2"/><rect x="1.8" y="1.8" width="17" height="6.5" rx="1.2" fill="#eef2f7" stroke="none"/><rect x="4.3" y="8" width="12" height="3.5" fill="#1a1a1a"/></g>
<text x="1517.5" y="1182.5" font-size="28" fill="#000" text-anchor="middle" letter-spacing="1.5">1.4</text>
<text x="1515.5" y="1240.5" font-size="26" fill="#5c5c5c" text-anchor="middle" letter-spacing="0">Row 1</text>
<path d="M1773.1 1153.4 C1776.5 1152.3 1777.0 1151.4 1781.0 1146.7 M1773.9 1165.7 C1778.9 1161.5 1784.5 1155.5 1791.9 1145.9 M1774.0 1179.2 C1783.1 1167.5 1792.2 1158.4 1803.0 1145.8 M1772.6 1194.0 C1785.2 1177.1 1799.5 1161.1 1813.5 1145.6 M1778.2 1199.9 C1790.8 1187.6 1799.9 1177.2 1826.7 1146.8 M1787.1 1202.0 C1806.6 1182.4 1820.8 1164.1 1836.2 1148.3 M1800.0 1202.0 C1814.2 1181.4 1831.3 1167.5 1849.8 1145.8 M1813.1 1199.7 C1823.2 1186.6 1831.2 1176.3 1862.8 1145.0 M1822.7 1199.1 C1836.1 1190.0 1847.6 1175.7 1870.5 1148.1 M1835.3 1203.1 C1850.6 1182.5 1867.4 1166.2 1884.3 1148.9 M1846.2 1198.9 C1859.1 1187.2 1873.0 1173.2 1896.5 1148.1 M1857.2 1200.0 C1868.7 1189.1 1880.9 1174.7 1905.1 1148.3 M1868.1 1200.0 C1886.3 1180.7 1905.0 1161.3 1916.5 1146.8 M1882.1 1201.2 C1889.9 1189.5 1902.1 1177.1 1929.0 1145.5 M1893.9 1200.0 C1907.8 1183.5 1922.8 1167.3 1942.2 1148.0 M1906.9 1202.3 C1921.2 1180.0 1939.9 1159.9 1952.0 1145.2 M1917.7 1201.1 C1931.4 1181.8 1946.2 1163.0 1966.6 1146.1 M1929.1 1200.8 C1939.1 1188.0 1946.7 1179.6 1974.4 1148.8 M1937.6 1199.2 C1953.3 1188.4 1966.8 1172.2 1986.3 1148.2 M1951.3 1199.6 C1963.6 1182.5 1979.5 1167.1 2001.7 1145.0 M1964.5 1199.8 C1980.1 1182.3 1996.3 1162.3 2009.7 1147.9 M1972.3 1200.7 C1986.5 1187.6 2001.0 1169.5 2022.6 1144.9 M1985.8 1201.2 C1999.2 1184.9 2014.3 1169.1 2032.4 1148.5 M1997.9 1199.2 C2013.1 1183.9 2025.0 1167.6 2045.8 1149.0 M2009.5 1199.4 C2019.1 1188.3 2030.7 1172.9 2058.4 1148.6 M2019.6 1201.4 C2037.9 1181.9 2055.2 1160.7 2067.9 1145.2 M2033.7 1203.0 C2040.4 1191.6 2052.7 1175.9 2080.2 1146.4 M2041.5 1200.8 C2056.2 1185.5 2070.9 1174.3 2092.2 1148.3 M2054.8 1201.6 C2064.8 1188.5 2075.2 1177.0 2093.6 1158.4 M2067.8 1201.6 C2074.9 1192.8 2082.8 1184.5 2093.2 1172.3 M2077.8 1200.2 C2082.8 1195.3 2087.9 1191.2 2091.7 1183.9 M2089.8 1200.0 C2091.4 1201.1 2090.8 1199.1 2093.3 1197.9" fill="none" stroke="#ffe2c4" stroke-width="2.1" stroke-linecap="round" stroke-linejoin="round" />
<path d="M1796.1 1142.5 C1877.8 1140.5 1959.9 1143.2 2062.4 1140.6 M2064.7 1144.6 C2066.5 1144.3 2073.0 1142.0 2075.5 1142.8 C2078.1 1143.6 2078.2 1147.8 2080.0 1149.5 C2081.9 1151.3 2084.7 1151.3 2086.5 1153.3 C2088.3 1155.4 2090.6 1159.0 2090.8 1161.7 C2091.0 1164.4 2088.4 1168.1 2088.0 1169.3 M2088.3 1165.4 C2094.0 1187.8 2094.6 1200.3 2091.1 1240.0 M2092.3 1239.1 C2091.5 1239.8 2089.1 1241.5 2087.7 1243.4 C2086.3 1245.4 2085.0 1248.7 2083.8 1250.9 C2082.6 1253.1 2082.5 1255.2 2080.5 1256.5 C2078.4 1257.8 2073.9 1257.6 2071.7 1258.8 C2069.4 1259.9 2067.7 1262.8 2066.9 1263.6 M2064.8 1262.3 C2007.2 1261.9 1946.4 1268.2 1795.0 1260.7 M1793.0 1264.2 C1791.4 1263.3 1785.6 1259.5 1783.4 1258.7 C1781.2 1258.0 1781.5 1261.0 1779.6 1259.7 C1777.7 1258.3 1773.4 1252.7 1771.8 1250.6 C1770.2 1248.4 1770.4 1248.8 1770.0 1246.9 C1769.6 1244.9 1769.4 1240.1 1769.3 1238.8 M1770.9 1234.6 C1765.4 1221.5 1768.1 1206.7 1766.3 1163.5 M1769.7 1169.3 C1769.9 1168.0 1770.5 1164.3 1770.8 1161.7 C1771.2 1159.0 1770.5 1155.5 1771.7 1153.5 C1773.0 1151.4 1775.8 1150.8 1778.2 1149.3 C1780.6 1147.9 1783.3 1145.4 1786.1 1144.7 C1788.9 1144.1 1793.6 1145.2 1795.1 1145.3" fill="none" stroke="#dd9a00" stroke-width="2.3" stroke-linecap="round" stroke-linejoin="round" />
<path d="M1769.4 1201.3 C1843.2 1201.3 1912.0 1204.5 2087.7 1201.6" fill="none" stroke="#dd9a00" stroke-width="2.3" stroke-linecap="round" stroke-linejoin="round" />
<g transform="translate(1778.3 1153.5)"><rect x="0.6" y="0.6" width="19.4" height="19" rx="2" fill="#d9e0ea" stroke="#9ba8ba" stroke-width="1.2"/><rect x="1.8" y="1.8" width="17" height="6.5" rx="1.2" fill="#eef2f7" stroke="none"/><rect x="4.3" y="8" width="12" height="3.5" fill="#1a1a1a"/></g>
<text x="1929.5" y="1183.5" font-size="28" fill="#000" text-anchor="middle" letter-spacing="1.5">1.7</text>
<text x="1927.5" y="1241.0" font-size="26" fill="#5c5c5c" text-anchor="middle" letter-spacing="0">Row 1</text>
<path d="M1772.9 320.3 C1777.0 313.4 1791.1 291.3 1797.4 279.1 C1803.8 266.9 1808.9 252.4 1811.1 247.1 M1785.5 316.4 C1788.5 312.0 1796.0 300.9 1803.2 289.9 C1810.3 278.9 1824.2 256.9 1828.4 250.4 M1807.4 315.4 C1808.1 309.6 1807.4 290.1 1811.6 280.6 C1815.8 271.1 1829.1 262.1 1832.6 258.4 M1826.4 318.0 C1827.8 312.5 1828.9 296.9 1834.9 285.0 C1840.8 273.0 1857.6 252.8 1862.1 246.3 M1832.5 315.1 C1834.1 310.6 1838.2 299.4 1841.8 288.3 C1845.4 277.3 1848.2 248.8 1854.0 248.8 C1859.8 248.9 1872.9 281.9 1876.7 288.6 M1859.9 312.6 C1860.2 307.7 1857.5 292.1 1861.7 283.1 C1866.0 274.0 1881.5 262.5 1885.4 258.3 M1866.5 311.3 C1869.2 307.0 1878.4 295.5 1882.4 285.4 C1886.4 275.3 1882.9 253.0 1890.5 250.6 C1898.0 248.2 1921.6 267.7 1927.8 271.1 M1876.9 321.2 C1878.4 315.2 1881.0 297.6 1885.5 285.6 C1890.1 273.6 1901.0 255.0 1904.1 248.9 M1903.4 315.3 C1907.2 312.1 1921.0 307.2 1926.0 296.1 C1931.1 285.0 1929.9 251.5 1933.8 248.6 C1937.7 245.8 1946.9 273.8 1949.5 278.8 M1923.3 320.8 C1923.6 316.8 1920.7 309.0 1925.2 296.5 C1929.6 284.0 1941.8 247.1 1950.1 245.6 C1958.3 244.1 1970.4 280.5 1974.5 287.5 M1932.8 311.3 C1936.6 306.5 1949.6 292.4 1955.4 282.8 C1961.1 273.2 1965.4 258.5 1967.4 253.6 M1948.3 321.0 C1949.4 316.5 1951.9 305.6 1954.8 293.8 C1957.6 282.1 1963.7 257.8 1965.5 250.6 M1951.4 311.0 C1955.8 308.0 1972.7 304.0 1977.8 293.2 C1982.9 282.3 1977.4 249.3 1982.1 246.0 C1986.8 242.7 2002.0 268.8 2006.0 273.4 M1967.3 317.9 C1968.2 312.3 1967.8 294.5 1973.2 284.3 C1978.5 274.2 1995.1 261.5 1999.5 256.9 M1991.0 320.0 C1992.1 315.9 1992.1 307.1 1997.8 295.1 C2003.5 283.1 2020.4 255.7 2025.0 247.8 M2003.2 321.6 C2008.1 315.3 2025.7 294.8 2032.6 283.9 C2039.5 273.1 2042.6 261.1 2044.6 256.5 M2014.4 320.8 C2018.2 316.6 2033.8 306.8 2037.4 295.7 C2041.1 284.6 2036.5 261.1 2036.3 254.1 M2023.9 321.7 C2028.3 316.6 2045.1 302.7 2050.4 291.1 C2055.6 279.4 2054.7 258.5 2055.6 252.0 M2045.8 319.5 C2047.5 315.5 2051.2 305.9 2056.2 295.9 C2061.3 285.8 2070.8 262.9 2076.3 259.1 C2081.8 255.4 2087.1 271.0 2089.3 273.4" fill="none" stroke="#d9e6fb" stroke-width="1.25" stroke-linecap="round" stroke-linejoin="round" />
<path d="M1776.3 237.1 C1791.4 237.8 1835.4 240.0 1866.8 241.2 C1898.2 242.4 1931.2 244.2 1964.7 244.5 C1998.1 244.7 2047.0 242.3 2067.4 242.8 C2087.8 243.4 2081.8 244.5 2087.0 247.7 C2092.2 251.0 2096.1 256.2 2098.4 262.4 C2100.7 268.7 2101.1 277.1 2100.9 285.2 C2100.6 293.4 2098.0 304.8 2096.8 311.3 C2095.6 317.9 2094.1 322.2 2093.5 324.4 M1796.7 260.0 C1811.1 259.7 1855.1 258.9 1883.1 258.3 C1911.1 257.8 1940.2 256.6 1964.7 256.7 C1989.1 256.8 2011.8 257.8 2029.9 259.1 C2048.0 260.5 2065.9 263.9 2073.1 264.9 M2052.7 251.0 C2056.1 253.3 2067.0 259.1 2073.1 264.9 C2079.2 270.6 2087.0 280.3 2089.4 285.2 C2091.9 290.1 2086.9 294.6 2087.8 294.2 C2088.8 293.8 2094.2 286.2 2095.1 282.8 C2096.1 279.4 2093.8 275.3 2093.5 273.8 M2064.2 238.8 C2066.6 239.3 2073.9 240.1 2078.8 242.0 C2083.7 243.9 2091.1 248.8 2093.5 250.2 M1796.7 258.3 C1794.2 257.1 1786.6 252.6 1782.0 251.0 C1777.4 249.4 1772.7 247.9 1768.9 248.5 C1765.1 249.2 1760.6 251.9 1759.1 255.1 C1757.7 258.2 1758.3 263.4 1760.0 267.3 C1761.6 271.2 1767.4 276.8 1768.9 278.7 M1756.7 272.2 C1758.2 274.9 1763.8 283.3 1765.7 288.5 C1767.6 293.7 1768.7 297.2 1768.1 303.2 C1767.6 309.2 1763.4 320.9 1762.4 324.4 M1742.8 282.8 C1745.3 283.2 1753.4 286.5 1757.5 285.2 C1761.6 284.0 1763.2 280.9 1767.3 275.5 C1771.4 270.0 1779.5 256.4 1782.0 252.6 M1778.7 311.3 C1793.4 312.2 1835.8 314.6 1866.8 316.2 C1897.8 317.9 1926.6 319.0 1964.7 321.1 C2002.7 323.3 2073.4 327.9 2095.1 329.3 M1779.5 321.9 C1788.6 324.0 1816.9 331.7 1834.2 334.2 C1851.4 336.6 1861.4 337.2 1883.1 336.6 C1904.9 336.1 1937.5 333.2 1964.7 330.9 C1991.8 328.6 2024.7 324.8 2046.2 322.8 C2067.7 320.7 2085.6 319.4 2093.5 318.7 M1759.1 330.9 C1761.2 331.3 1768.9 330.9 1771.4 333.4 C1773.8 335.8 1771.5 342.7 1773.8 345.6 C1776.1 348.4 1783.3 349.7 1785.2 350.5 M1746.9 349.7 C1748.7 352.5 1753.8 361.2 1757.5 366.8 C1761.2 372.4 1765.7 379.8 1768.9 383.1 C1772.2 386.4 1775.2 387.5 1777.1 386.4 C1779.0 385.3 1781.2 381.2 1780.3 376.6 C1779.5 372.0 1773.6 361.6 1772.2 358.6 M1768.9 350.5 C1771.1 352.1 1777.9 356.5 1782.0 360.3 C1786.1 364.1 1790.1 370.9 1793.4 373.3 C1796.7 375.8 1799.6 375.6 1801.6 375.0 C1803.5 374.3 1804.3 370.2 1804.8 369.2 M1788.5 367.6 C1798.8 368.2 1826.6 370.3 1850.5 370.9 C1874.4 371.4 1907.6 370.5 1932.0 370.9 C1956.5 371.3 1975.8 372.0 1997.3 373.3 C2018.8 374.7 2049.2 378.9 2060.9 379.0 C2072.6 379.2 2061.4 376.2 2067.4 374.1 C2073.4 372.1 2090.8 369.9 2096.8 366.8 C2102.8 363.7 2101.4 359.5 2103.3 355.4 C2105.2 351.3 2107.4 344.5 2108.2 342.3 M1783.6 394.2 C1794.8 392.3 1825.7 387.7 1850.5 383.1 C1875.2 378.5 1904.9 371.0 1932.0 366.8 C1959.2 362.6 1990.9 359.8 2013.6 357.8 C2036.3 355.9 2059.1 355.5 2068.2 355.1 M2093.5 324.4 C2092.2 326.0 2085.5 330.9 2085.4 334.2 C2085.2 337.4 2092.1 340.7 2092.7 344.0 C2093.3 347.2 2089.6 352.1 2088.9 353.7 M2096.8 366.8 C2095.4 369.0 2091.2 375.2 2088.6 379.8 C2086.0 384.5 2082.5 392.1 2081.3 394.5 M2082.1 327.6 C2084.3 328.0 2093.0 329.3 2095.1 329.6 M2085.4 290.1 C2084.9 292.0 2082.8 297.7 2082.9 301.6 C2083.0 305.4 2085.6 311.1 2086.2 313.0" fill="none" stroke="#6c8ebf" stroke-width="2.2" stroke-linecap="round" stroke-linejoin="round" />
<g transform="translate(1779 268)"><rect x="0.6" y="0.6" width="19.4" height="19" rx="2" fill="#d9e0ea" stroke="#9ba8ba" stroke-width="1.2"/><rect x="1.8" y="1.8" width="17" height="6.5" rx="1.2" fill="#eef2f7" stroke="none"/><rect x="4.3" y="8" width="12" height="3.5" fill="#1a1a1a"/></g>
<text x="1929.7" y="301" font-size="28" fill="#000" text-anchor="middle" letter-spacing="1.5">1.5</text>
<text x="1927.7" y="357.5" font-size="26" fill="#5c5c5c" text-anchor="middle" letter-spacing="0">Row 1</text>
<path d="M1357.0 533.9 C1360.5 530.1 1371.4 519.8 1377.8 511.2 C1384.2 502.5 1392.5 486.6 1395.4 481.7 M1363.0 527.9 C1363.9 525.2 1363.9 521.1 1368.6 512.1 C1373.3 503.1 1383.7 477.0 1391.0 473.9 C1398.4 470.8 1409.2 490.1 1412.8 493.3 M1391.0 527.2 C1391.7 521.8 1389.7 503.0 1395.2 495.1 C1400.6 487.2 1419.1 482.3 1423.9 479.8 M1398.0 532.9 C1398.7 527.2 1396.1 508.4 1402.4 498.7 C1408.8 489.1 1430.5 479.0 1436.1 475.0 M1410.7 531.1 C1411.9 526.8 1411.2 514.5 1417.5 505.2 C1423.7 495.9 1443.2 480.4 1448.3 475.5 M1428.7 523.2 C1430.1 520.2 1431.7 512.9 1436.9 505.3 C1442.1 497.7 1453.4 477.0 1459.9 477.4 C1466.5 477.9 1473.4 503.0 1476.0 508.1 M1437.8 529.5 C1439.6 523.9 1444.9 504.4 1448.8 496.1 C1452.7 487.9 1459.0 482.7 1461.0 480.0 M1463.3 532.5 C1466.9 527.0 1480.3 507.3 1484.6 499.5 C1489.0 491.7 1488.6 487.9 1489.4 485.6 M1477.2 526.1 C1477.7 521.9 1476.2 508.4 1479.9 500.7 C1483.5 493.0 1496.0 483.5 1499.2 480.1 M1495.5 522.0 C1495.8 517.7 1493.8 502.3 1497.5 496.1 C1501.2 489.9 1514.1 486.5 1517.4 484.6 M1503.8 526.3 C1507.9 521.9 1522.2 507.7 1528.8 500.0 C1535.3 492.2 1540.7 483.0 1543.1 479.6 M1511.7 533.8 C1513.8 528.1 1517.1 508.7 1524.4 499.7 C1531.6 490.6 1550.2 482.8 1555.3 479.4 M1535.3 526.7 C1536.5 522.2 1538.7 507.5 1542.4 499.9 C1546.1 492.3 1552.0 481.4 1557.3 481.1 C1562.6 480.8 1571.3 495.3 1574.1 498.1 M1558.3 530.0 C1561.0 524.7 1570.2 508.2 1574.7 498.2 C1579.2 488.3 1583.4 474.9 1585.1 470.3 M1553.8 523.4 C1556.3 520.1 1564.0 512.3 1568.7 503.6 C1573.3 494.9 1573.8 469.9 1581.6 471.2 C1589.4 472.6 1609.8 504.8 1615.4 511.5 M1579.6 524.4 C1584.2 519.4 1602.7 501.7 1607.1 494.4 C1611.4 487.1 1605.8 482.7 1605.5 480.4 M1603.2 525.8 C1605.8 523.6 1612.8 519.5 1618.7 512.8 C1624.6 506.1 1635.4 490.1 1638.7 485.5 M1614.9 527.1 C1617.1 524.7 1623.3 522.1 1628.2 512.7 C1633.1 503.2 1641.5 477.5 1644.2 470.4 M1631.0 527.8 C1634.6 524.7 1649.4 517.0 1652.9 509.2 C1656.4 501.5 1652.0 485.9 1651.8 481.2" fill="none" stroke="#d9e6fb" stroke-width="1.25" stroke-linecap="round" stroke-linejoin="round" />
<path d="M1388.5 482.7 C1398.8 483.4 1429.3 485.9 1450.5 486.8 C1471.7 487.8 1494.0 488.6 1515.7 488.4 C1537.5 488.3 1560.0 487.2 1581.0 486.0 C1601.9 484.8 1631.3 481.9 1641.3 481.1 M1396.7 503.9 C1408.3 503.0 1444.2 499.6 1466.8 498.2 C1489.4 496.9 1513.0 497.1 1532.0 495.8 C1551.1 494.4 1564.7 493.7 1581.0 490.1 C1597.3 486.5 1621.7 476.9 1629.9 474.2 M1368.9 478.7 C1369.1 479.9 1371.1 483.8 1369.7 486.0 C1368.4 488.2 1364.4 489.0 1360.8 491.7 C1357.1 494.4 1351.1 499.0 1347.7 502.3 C1344.3 505.6 1341.2 507.9 1340.4 511.3 C1339.6 514.7 1342.4 520.8 1342.8 522.7 M1344.5 502.3 C1346.2 504.2 1352.6 509.9 1355.1 513.7 C1357.5 517.5 1358.3 519.7 1359.1 525.1 C1360.0 530.6 1360.6 540.6 1360.0 546.3 C1359.3 552.0 1355.3 553.1 1355.1 559.4 C1354.8 565.6 1357.8 579.8 1358.3 583.9 M1383.6 485.2 C1383.3 485.9 1384.2 488.7 1382.0 489.3 C1379.8 489.8 1372.5 488.6 1370.6 488.4 M1355.1 543.1 C1365.5 545.0 1396.5 551.9 1417.9 554.5 C1439.2 557.1 1458.6 558.8 1483.1 558.6 C1507.6 558.3 1532.3 555.4 1564.7 552.9 C1597.0 550.3 1658.4 544.7 1677.2 543.1 M1358.3 554.5 C1371.0 553.3 1410.7 548.4 1434.2 547.2 C1457.7 545.9 1477.7 546.2 1499.4 547.2 C1521.2 548.1 1542.9 550.6 1564.7 552.9 C1586.4 555.2 1611.1 558.6 1629.9 561.0 C1648.7 563.5 1669.3 566.5 1677.2 567.5 M1352.6 548.0 C1354.3 548.8 1361.6 551.0 1362.4 552.9 C1363.2 554.8 1359.0 559.4 1357.5 559.4 C1356.0 559.4 1354.1 554.0 1353.4 552.9 M1655.2 504.7 C1656.9 503.0 1661.8 495.4 1665.8 494.1 C1669.7 492.9 1675.6 494.6 1678.8 497.4 C1682.1 500.3 1685.4 509.6 1685.4 511.3 C1685.4 512.9 1679.9 507.9 1678.8 507.2 M1661.7 493.3 C1663.7 493.7 1670.4 494.0 1673.9 495.8 C1677.5 497.5 1681.4 502.6 1682.9 503.9 M1675.6 506.4 C1675.0 509.2 1672.6 518.5 1672.3 523.5 C1672.0 528.5 1672.9 532.7 1673.9 536.6 C1675.0 540.4 1677.7 542.3 1678.8 546.3 C1679.9 550.4 1680.6 556.7 1680.5 561.0 C1680.3 565.4 1678.4 570.5 1678.0 572.4 M1669.9 552.9 C1671.1 555.0 1675.0 561.3 1677.2 565.9 C1679.4 570.5 1682.0 578.1 1682.9 580.6 M1651.1 604.2 C1652.5 602.2 1655.7 595.5 1659.3 592.0 C1662.8 588.5 1668.2 584.8 1672.3 583.0 C1676.4 581.3 1679.4 580.3 1683.7 581.4 C1688.1 582.5 1696.0 588.2 1698.4 589.6 M1635.6 596.1 C1638.7 597.3 1647.4 601.0 1654.4 603.4 C1661.3 605.9 1672.6 610.0 1677.2 610.8 C1681.8 611.6 1683.2 609.8 1682.1 608.3 C1681.0 606.8 1675.3 603.7 1670.7 601.8 C1666.1 599.9 1657.1 597.7 1654.4 596.9 M1400.7 601.8 C1411.7 601.0 1444.9 598.0 1466.8 596.9 C1488.7 595.8 1510.3 596.2 1532.0 595.3 C1553.8 594.3 1577.7 592.7 1597.3 591.2 C1616.9 589.7 1640.8 587.1 1649.5 586.3 M1392.6 610.8 C1405.0 611.2 1443.6 612.3 1466.8 613.2 C1490.0 614.2 1511.6 615.7 1532.0 616.5 C1552.4 617.3 1569.8 618.6 1589.1 618.1 C1608.4 617.6 1638.1 614.0 1647.8 613.2 M1349.4 580.6 C1349.9 582.8 1350.7 589.6 1352.6 593.6 C1354.5 597.7 1357.0 601.5 1360.8 605.1 C1364.6 608.6 1369.2 612.2 1375.5 614.8 C1381.7 617.5 1394.5 620.0 1398.3 621.0 M1355.1 598.5 C1357.4 597.9 1363.7 595.8 1368.9 594.5 C1374.2 593.2 1383.6 591.3 1386.5 590.7" fill="none" stroke="#6c8ebf" stroke-width="2.2" stroke-linecap="round" stroke-linejoin="round" />
<g transform="translate(1366.5 496)"><rect x="0.6" y="0.6" width="19.4" height="19" rx="2" fill="#d9e0ea" stroke="#9ba8ba" stroke-width="1.2"/><rect x="1.8" y="1.8" width="17" height="6.5" rx="1.2" fill="#eef2f7" stroke="none"/><rect x="4.3" y="8" width="12" height="3.5" fill="#1a1a1a"/></g>
<text x="1517.4" y="528" font-size="28" fill="#000" text-anchor="middle" letter-spacing="1.5">1.2</text>
<text x="1515.4" y="584.5" font-size="26" fill="#5c5c5c" text-anchor="middle" letter-spacing="0">Row 1</text>
<path d="M1765.3 553.2 C1768.2 545.8 1779.0 521.7 1782.4 508.6 C1785.8 495.6 1781.0 473.3 1785.8 474.9 C1790.6 476.4 1807.0 510.7 1811.2 517.9 M1787.7 549.4 C1788.4 543.9 1786.3 527.7 1791.7 516.4 C1797.0 505.2 1815.1 487.6 1819.8 481.8 M1800.8 556.9 C1804.4 550.5 1816.5 531.0 1822.1 518.8 C1827.8 506.6 1832.7 489.5 1834.8 483.7 M1801.2 556.5 C1805.8 549.1 1821.1 524.6 1828.5 512.2 C1835.8 499.8 1842.1 481.8 1845.3 482.1 C1848.6 482.4 1847.5 508.7 1848.0 514.0 M1823.4 558.9 C1825.3 553.3 1827.2 539.6 1834.6 525.1 C1842.1 510.6 1862.6 480.8 1868.2 471.9 M1846.6 553.3 C1847.7 546.6 1847.9 526.1 1853.5 513.1 C1859.0 500.0 1875.5 481.4 1879.9 475.1 M1855.1 548.2 C1857.5 544.8 1866.3 538.9 1869.8 527.4 C1873.3 515.9 1875.1 487.4 1876.1 479.5 M1869.9 553.9 C1872.7 546.5 1884.0 522.5 1887.0 509.1 C1890.0 495.7 1887.6 479.6 1887.7 473.7 M1874.5 552.5 C1877.4 548.0 1884.2 538.4 1891.6 525.3 C1898.9 512.2 1914.3 482.4 1918.9 473.8 M1902.5 555.9 C1902.6 549.6 1898.8 530.9 1903.0 517.8 C1907.1 504.7 1923.4 484.1 1927.5 477.4 M1917.1 554.2 C1921.0 548.9 1936.2 535.7 1940.1 522.0 C1944.1 508.3 1935.1 474.8 1940.9 472.2 C1946.8 469.6 1969.6 500.7 1975.3 506.4 M1941.1 556.4 C1942.0 550.9 1942.3 535.2 1946.4 523.3 C1950.5 511.4 1962.4 491.6 1965.6 485.2 M1949.9 555.6 C1950.5 549.6 1949.6 532.2 1953.9 519.8 C1958.3 507.3 1972.2 487.4 1975.9 480.9 M1955.9 551.1 C1960.4 545.6 1977.5 529.1 1982.6 518.2 C1987.6 507.3 1985.7 490.9 1986.3 485.4 M1980.3 549.5 C1982.2 542.9 1986.6 522.1 1991.2 510.1 C1995.8 498.0 2005.1 482.7 2007.9 477.2 M1997.1 550.0 C1998.1 545.3 1998.0 534.2 2003.0 522.0 C2008.0 509.8 2023.1 484.1 2027.1 476.6 M2007.1 555.1 C2007.2 549.0 2004.4 530.9 2008.1 518.3 C2011.7 505.7 2025.4 485.8 2028.9 479.3 M2029.7 556.9 C2031.6 550.5 2038.4 531.1 2041.0 518.6 C2043.5 506.0 2040.1 482.8 2044.8 481.7 C2049.6 480.6 2065.6 506.9 2069.7 512.0 M2037.5 554.6 C2041.0 546.9 2054.4 522.1 2058.5 508.8 C2062.7 495.6 2061.7 480.8 2062.3 475.2 M2053.9 559.3 C2055.8 552.0 2059.5 529.2 2065.4 515.8 C2071.2 502.4 2082.8 481.2 2088.8 478.9 C2094.7 476.6 2099.0 498.1 2101.0 501.9" fill="none" stroke="#d9e6fb" stroke-width="1.25" stroke-linecap="round" stroke-linejoin="round" />
<path d="M1782.8 477.8 C1796.8 478.1 1842.2 478.4 1866.8 479.5 C1891.4 480.6 1908.7 483.0 1930.4 484.4 C1952.2 485.7 1977.2 486.7 1997.3 487.6 C2017.4 488.6 2036.8 489.7 2051.1 490.1 C2065.4 490.5 2077.6 490.1 2082.9 490.1 M1783.6 479.5 C1808.1 480.4 1885.7 483.5 1930.4 485.2 C1975.1 486.8 2031.7 488.6 2051.9 489.3 M1781.2 480.3 C1781.8 481.1 1786.5 482.6 1785.2 485.2 C1784.0 487.8 1778.2 490.5 1773.8 495.8 C1769.5 501.1 1763.0 510.2 1759.1 517.0 C1755.3 523.8 1752.3 533.3 1751.0 536.6 M1795.8 486.8 C1793.5 488.3 1786.5 491.8 1782.0 495.8 C1777.5 499.7 1772.1 505.0 1768.9 510.5 C1765.8 515.9 1763.5 523.5 1763.2 528.4 C1763.0 533.3 1766.6 537.9 1767.3 539.8 M1772.2 513.7 C1771.9 516.2 1770.3 524.6 1770.6 528.4 C1770.8 532.2 1774.4 533.6 1773.8 536.6 C1773.3 539.5 1768.4 544.7 1767.3 546.3 M1759.1 539.8 C1771.7 539.1 1810.8 536.0 1834.2 535.7 C1857.6 535.5 1877.7 536.4 1899.4 538.2 C1921.2 540.0 1942.9 543.3 1964.7 546.3 C1986.4 549.3 2011.3 553.4 2029.9 556.1 C2048.5 558.8 2068.6 561.6 2076.4 562.6 M1770.6 548.8 C1783.9 549.5 1823.6 551.5 1850.5 552.9 C1877.4 554.2 1904.9 556.7 1932.0 556.9 C1959.2 557.2 1988.3 555.8 2013.6 554.5 C2038.9 553.2 2072.0 550.1 2083.7 549.3 M1768.9 546.3 C1770.0 548.5 1775.0 554.4 1775.5 559.4 C1775.9 564.4 1772.1 573.7 1771.4 576.5 M1755.9 581.4 C1758.1 584.8 1764.0 595.7 1768.9 601.8 C1773.8 607.9 1780.5 613.5 1785.2 618.1 C1790.0 622.7 1795.4 627.3 1797.5 629.2 M1768.1 579.8 C1769.1 582.6 1771.0 591.1 1773.8 596.9 C1776.7 602.7 1780.8 610.0 1785.2 614.8 C1789.7 619.7 1798.2 624.1 1800.7 625.9 M1773.8 595.3 C1786.6 594.9 1826.8 592.6 1850.5 592.8 C1874.1 593.1 1894.0 595.0 1915.7 596.9 C1937.5 598.8 1958.8 600.7 1981.0 604.2 C2003.1 607.8 2037.4 615.8 2048.7 618.1 M1783.6 600.2 C1794.8 601.1 1825.7 604.4 1850.5 605.9 C1875.2 607.4 1907.6 608.5 1932.0 609.1 C1956.5 609.8 1977.2 610.5 1997.3 610.0 C2017.4 609.4 2043.5 606.6 2052.7 605.9 M2051.1 490.1 C2053.0 489.4 2059.3 486.0 2062.5 486.0 C2065.8 486.0 2066.6 485.9 2070.7 490.1 C2074.8 494.3 2083.9 507.2 2087.0 511.3 C2090.1 515.3 2089.0 514.0 2089.4 514.5 M2082.9 475.4 C2084.7 478.1 2090.1 486.5 2093.5 491.7 C2096.9 496.9 2103.2 504.7 2103.3 506.4 C2103.4 508.0 2095.8 502.3 2094.3 501.5 M2086.2 510.5 C2086.7 513.2 2087.9 521.6 2089.4 526.8 C2090.9 531.9 2094.7 536.0 2095.1 541.4 C2095.6 546.9 2093.9 552.2 2091.9 559.4 C2089.8 566.6 2084.4 580.5 2082.9 584.7 M2073.1 529.2 C2074.6 530.6 2076.7 535.5 2082.1 537.4 C2087.5 539.2 2101.8 539.7 2105.7 540.1 M2091.9 543.9 C2091.6 547.8 2090.5 563.6 2090.2 567.5 M2062.2 607.5 C2065.0 605.2 2073.4 597.4 2078.8 593.6 C2084.3 589.8 2092.2 586.2 2094.8 584.7 M2073.9 622.2 C2074.5 620.1 2075.6 613.2 2077.2 610.0 C2078.8 606.7 2081.4 604.1 2083.7 602.6 C2086.0 601.1 2091.9 601.7 2091.1 601.0 C2090.2 600.3 2080.9 598.9 2078.8 598.5" fill="none" stroke="#6c8ebf" stroke-width="2.2" stroke-linecap="round" stroke-linejoin="round" />
<g transform="translate(1779 498)"><rect x="0.6" y="0.6" width="19.4" height="19" rx="2" fill="#d9e0ea" stroke="#9ba8ba" stroke-width="1.2"/><rect x="1.8" y="1.8" width="17" height="6.5" rx="1.2" fill="#eef2f7" stroke="none"/><rect x="4.3" y="8" width="12" height="3.5" fill="#1a1a1a"/></g>
<text x="1929.7" y="529.5" font-size="28" fill="#000" text-anchor="middle" letter-spacing="1.5">1.6</text>
<text x="1927.7" y="586.5" font-size="26" fill="#5c5c5c" text-anchor="middle" letter-spacing="0">Row 1</text>
<path d="M2120.5 840.3 C2120.4 837.9 2120.0 835.3 2123.2 835.4 M2119.2 849.2 C2122.6 845.8 2128.5 838.1 2134.1 834.8 M2119.8 858.7 C2125.4 853.6 2132.5 845.0 2140.7 834.9 M2118.0 869.2 C2127.9 855.9 2138.6 844.3 2150.4 835.6 M2118.5 878.1 C2132.4 862.2 2146.0 850.7 2160.6 832.1 M2119.8 887.1 C2135.1 868.1 2156.4 846.8 2167.9 834.8 M2128.7 889.8 C2144.4 866.5 2158.3 849.1 2178.0 832.1 M2135.0 893.4 C2152.1 865.7 2175.3 844.6 2184.5 831.3 M2142.2 893.1 C2160.0 869.3 2179.1 846.7 2193.2 837.2 M2151.0 893.5 C2165.5 870.5 2179.2 856.7 2203.6 833.1 M2159.5 890.1 C2175.0 875.4 2189.3 859.9 2210.2 837.2 M2170.1 887.9 C2184.2 875.6 2193.2 865.3 2218.5 833.5 M2182.1 893.2 C2187.6 876.2 2203.0 862.9 2233.2 834.0 M2189.9 892.4 C2207.2 871.2 2228.0 847.1 2240.4 834.1 M2200.2 888.1 C2209.5 873.3 2218.7 862.7 2247.8 833.2 M2207.4 888.4 C2219.2 869.9 2235.7 853.9 2256.7 835.9 M2215.2 886.4 C2235.8 864.1 2255.5 845.9 2264.7 837.5 M2222.1 891.7 C2238.9 874.1 2253.2 858.1 2272.5 834.5 M2235.8 890.9 C2248.7 873.0 2260.8 855.8 2286.5 830.5 M2243.7 891.1 C2252.2 876.3 2270.9 856.8 2288.7 834.7 M2250.0 890.5 C2271.9 869.1 2289.7 847.1 2303.8 835.9 M2263.0 891.0 C2271.3 872.9 2289.1 856.6 2308.4 836.9 M2271.2 890.3 C2282.7 872.6 2300.5 857.0 2319.1 833.0 M2275.6 887.0 C2290.7 869.8 2307.5 854.0 2330.6 832.7 M2287.8 888.6 C2301.4 872.1 2308.0 864.0 2337.9 832.3 M2293.4 890.3 C2312.2 873.5 2326.0 853.2 2346.0 836.7 M2303.3 889.3 C2321.2 873.0 2333.0 857.8 2355.1 834.1 M2309.3 891.6 C2331.5 872.7 2349.3 854.3 2360.4 832.7 M2323.8 887.5 C2338.9 869.2 2361.4 842.6 2372.3 831.8 M2329.8 886.5 C2351.6 872.0 2369.0 844.8 2384.1 832.3 M2336.7 888.2 C2356.8 868.2 2370.9 855.5 2389.2 831.5 M2347.4 892.4 C2366.9 868.3 2381.5 851.8 2396.0 837.0 M2360.5 893.5 C2371.3 872.2 2384.7 859.6 2407.4 832.0 M2367.9 891.7 C2376.0 876.8 2386.9 864.7 2416.0 836.0 M2371.7 887.9 C2384.1 874.9 2399.7 863.7 2422.1 837.5 M2382.0 890.8 C2392.9 873.9 2402.3 866.4 2435.9 837.6 M2392.9 888.4 C2402.1 880.6 2411.8 865.1 2438.9 841.6 M2402.6 890.7 C2413.3 878.2 2424.5 863.7 2437.0 852.7 M2411.2 891.6 C2417.3 882.7 2426.1 873.3 2437.2 861.6 M2417.9 889.8 C2424.4 883.6 2428.3 880.9 2435.4 872.4 M2427.9 891.7 C2432.8 888.2 2433.9 885.4 2437.8 879.9" fill="none" stroke="#00c2a8" stroke-width="2.1" stroke-linecap="round" stroke-linejoin="round" />
<path d="M2137.1 829.5 C2201.7 830.6 2260.6 827.6 2409.9 830.3 M2136.4 829.2 C2216.3 831.3 2298.2 829.9 2409.5 829.7 M2411.2 831.3 C2412.5 831.5 2416.6 832.0 2418.8 832.3 C2421.1 832.6 2422.7 832.3 2424.7 833.4 C2426.7 834.5 2429.3 836.7 2430.8 838.8 C2432.3 841.0 2433.3 843.5 2433.6 846.1 C2433.9 848.7 2432.7 853.1 2432.5 854.5 M2408.9 831.7 C2410.1 831.8 2413.5 831.8 2416.0 831.9 C2418.5 832.1 2421.8 831.4 2423.8 832.6 C2425.9 833.8 2426.7 836.5 2428.4 839.0 C2430.2 841.6 2432.8 845.5 2434.0 847.8 C2435.3 850.0 2435.6 851.7 2435.9 852.5 M2432.4 855.3 C2431.7 871.9 2432.4 888.4 2432.9 926.8 M2433.2 854.4 C2435.3 882.9 2434.6 911.2 2433.6 928.2 M2434.8 928.0 C2434.5 929.3 2433.9 933.3 2433.0 935.7 C2432.0 938.2 2430.8 940.5 2429.3 942.5 C2427.8 944.6 2426.0 946.6 2423.9 947.8 C2421.8 949.1 2419.1 949.3 2416.8 949.9 C2414.5 950.4 2411.3 950.9 2410.2 951.2 M2435.5 928.5 C2434.8 929.7 2432.4 933.3 2431.4 935.3 C2430.4 937.4 2431.0 938.5 2429.5 940.7 C2428.0 942.8 2424.1 946.5 2422.4 948.2 C2420.7 949.9 2421.6 950.7 2419.6 950.8 C2417.6 951.0 2411.9 949.4 2410.3 949.1 M2409.3 950.3 C2337.4 949.0 2263.8 953.6 2137.3 949.6 M2411.1 951.3 C2332.1 952.5 2251.8 951.7 2137.5 950.6 M2135.7 950.8 C2134.8 950.8 2133.0 950.9 2130.6 950.4 C2128.2 949.8 2123.8 949.0 2121.4 947.5 C2119.0 945.9 2117.5 943.4 2116.1 941.2 C2114.8 938.9 2113.8 936.1 2113.2 933.8 C2112.5 931.5 2112.3 928.4 2112.1 927.4 M2137.9 952.7 C2136.5 951.9 2132.5 949.2 2129.6 947.9 C2126.8 946.5 2123.1 945.9 2120.8 944.6 C2118.6 943.2 2117.2 941.6 2115.9 939.7 C2114.7 937.7 2113.5 935.1 2113.3 932.9 C2113.0 930.6 2114.3 927.5 2114.6 926.4 M2113.0 924.6 C2112.3 907.7 2112.7 882.8 2113.7 854.0 M2114.2 927.8 C2113.9 905.9 2112.6 882.5 2113.9 853.8 M2111.5 854.8 C2111.7 853.3 2111.8 848.5 2113.0 845.9 C2114.3 843.2 2117.1 840.9 2118.9 838.9 C2120.7 836.9 2122.0 835.2 2123.9 833.8 C2125.9 832.5 2128.3 831.3 2130.5 830.8 C2132.7 830.3 2136.1 830.6 2137.2 830.6 M2114.0 852.7 C2114.1 851.4 2114.5 847.0 2114.9 845.1 C2115.3 843.2 2115.4 842.9 2116.5 841.1 C2117.5 839.3 2119.5 835.8 2121.4 834.2 C2123.3 832.6 2125.5 832.3 2127.9 831.5 C2130.2 830.7 2134.3 829.7 2135.6 829.4" fill="none" stroke="#046b5e" stroke-width="2.3" stroke-linecap="round" stroke-linejoin="round" />
<path d="M2111.1 888.1 C2238.5 888.2 2365.7 886.4 2432.6 890.0 M2113.1 888.3 C2218.4 889.3 2324.7 889.4 2433.4 888.2" fill="none" stroke="#046b5e" stroke-width="2.6" stroke-linecap="round" stroke-linejoin="round" />
<g transform="translate(2122.3 840.5)"><rect x="0.6" y="0.6" width="19.4" height="19" rx="2" fill="#d9e0ea" stroke="#9ba8ba" stroke-width="1.2"/><rect x="1.8" y="1.8" width="17" height="6.5" rx="1.2" fill="#eef2f7" stroke="none"/><rect x="4.3" y="8" width="12" height="3.5" fill="#1a1a1a"/></g>
<text x="2273.5" y="870.5" font-size="28" fill="#5c5c5c" text-anchor="middle" letter-spacing="1.5">1.8</text>
<text x="2271.5" y="929.0" font-size="26" fill="#5c5c5c" text-anchor="middle" letter-spacing="0">Row 1</text>
<path d="M2481.9 493.3 C2485.5 491.6 2487.3 489.7 2488.6 489.3 M2482.4 504.9 C2484.9 501.0 2491.6 497.3 2495.3 487.1 M2485.8 515.0 C2490.2 506.2 2497.9 494.8 2504.9 487.7 M2482.7 524.3 C2492.7 514.6 2502.9 502.4 2516.2 489.3 M2484.6 533.2 C2497.6 519.9 2508.1 505.8 2523.4 489.6 M2485.0 544.8 C2493.5 530.5 2510.0 514.6 2533.3 490.1 M2491.5 546.0 C2506.4 529.1 2514.0 516.2 2539.3 487.3 M2497.8 544.8 C2514.5 525.9 2530.5 512.0 2553.9 492.3 M2507.4 543.4 C2522.3 527.6 2542.9 506.4 2557.6 492.5 M2521.1 546.6 C2532.8 524.5 2548.0 506.5 2566.3 491.0 M2530.2 542.6 C2537.2 532.4 2545.7 520.2 2574.2 487.7 M2534.3 543.8 C2546.4 527.3 2559.9 516.3 2585.1 487.1 M2542.9 547.5 C2557.5 533.4 2561.5 523.8 2596.9 485.5 M2551.1 548.5 C2563.4 527.8 2579.8 519.1 2605.4 485.5 M2565.7 542.2 C2573.6 534.1 2579.3 524.3 2611.4 488.1 M2568.1 545.9 C2586.1 526.6 2608.7 505.2 2622.7 492.4 M2576.6 548.6 C2594.6 520.8 2616.8 507.2 2630.1 486.9 M2587.9 543.3 C2601.8 536.8 2612.8 519.6 2640.8 486.6 M2599.9 543.0 C2614.2 530.2 2627.7 508.9 2645.6 491.2 M2608.6 547.7 C2623.6 520.2 2642.8 501.8 2656.2 490.4 M2615.2 545.6 C2629.9 529.4 2640.4 515.4 2663.7 490.4 M2622.5 546.5 C2635.5 535.3 2645.3 518.8 2677.7 487.3 M2635.8 546.8 C2650.0 524.3 2675.1 501.0 2684.2 490.1 M2640.0 545.9 C2657.9 527.4 2673.2 507.9 2690.3 491.7 M2649.1 542.9 C2672.6 526.7 2684.1 500.5 2702.0 488.7 M2657.4 548.4 C2674.4 526.5 2687.8 507.4 2708.2 487.4 M2666.1 541.9 C2687.1 527.0 2699.4 507.5 2722.8 485.5 M2677.7 544.7 C2697.2 525.2 2715.2 501.6 2726.7 487.4 M2684.0 541.8 C2697.9 529.3 2719.4 512.4 2734.9 489.8 M2693.9 543.6 C2707.0 525.5 2728.4 510.5 2747.6 488.9 M2703.1 545.1 C2713.4 529.5 2726.8 515.9 2755.1 492.0 M2711.9 547.5 C2728.4 522.7 2746.9 504.8 2765.5 492.1 M2722.5 544.6 C2735.4 530.8 2748.3 520.7 2771.7 489.3 M2730.4 544.0 C2743.1 529.2 2760.0 512.9 2781.7 490.2 M2741.6 547.3 C2747.6 536.0 2763.1 522.6 2792.7 486.8 M2751.7 543.9 C2763.7 533.5 2769.3 514.4 2802.9 489.0 M2754.2 547.6 C2775.3 526.9 2788.8 507.0 2804.2 497.8 M2765.2 545.1 C2781.5 529.9 2793.6 513.4 2799.5 505.7 M2774.5 543.8 C2783.0 539.2 2787.5 529.0 2800.6 514.8 M2783.2 546.3 C2787.8 541.2 2792.2 537.9 2802.8 528.6 M2791.6 543.9 C2793.3 541.6 2795.5 542.5 2802.2 536.4" fill="none" stroke="#00c2a8" stroke-width="2.1" stroke-linecap="round" stroke-linejoin="round" />
<path d="M2499.8 484.8 C2585.0 483.1 2673.8 481.7 2774.1 485.4 M2500.8 486.0 C2592.7 487.1 2682.9 486.4 2773.7 484.3 M2775.5 484.5 C2776.6 485.0 2780.2 486.8 2782.5 487.7 C2784.8 488.6 2787.3 489.1 2789.3 490.1 C2791.3 491.2 2792.9 492.3 2794.6 494.1 C2796.3 496.0 2798.9 498.8 2799.4 501.2 C2799.8 503.6 2797.8 507.5 2797.5 508.8 M2774.6 483.7 C2775.9 483.8 2779.4 483.3 2782.1 484.3 C2784.8 485.3 2789.2 487.9 2791.1 489.7 C2793.0 491.5 2792.3 493.2 2793.5 495.1 C2794.7 497.0 2797.1 498.8 2798.2 501.1 C2799.4 503.4 2800.0 507.5 2800.4 508.8 M2797.2 510.1 C2802.1 537.6 2797.2 561.7 2796.4 579.9 M2799.1 509.8 C2798.1 535.3 2799.4 560.7 2799.2 580.1 M2797.7 579.7 C2797.8 581.1 2798.8 585.4 2798.5 587.7 C2798.2 590.0 2797.4 591.8 2795.9 593.5 C2794.4 595.3 2791.7 596.9 2789.4 598.3 C2787.1 599.8 2784.7 601.2 2782.2 602.1 C2779.7 603.1 2775.8 603.6 2774.5 603.9 M2799.2 578.7 C2799.0 580.1 2798.4 584.7 2797.9 587.3 C2797.3 590.0 2797.2 592.8 2795.9 594.5 C2794.6 596.2 2792.7 596.3 2790.0 597.3 C2787.4 598.2 2783.0 599.2 2780.2 600.1 C2777.4 601.1 2774.3 602.6 2773.2 603.0 M2774.7 605.0 C2715.4 605.1 2656.1 603.2 2502.4 601.0 M2774.3 604.2 C2712.5 602.6 2651.0 602.2 2501.3 604.3 M2503.2 601.4 C2502.0 601.6 2498.8 602.8 2496.1 602.3 C2493.4 601.8 2489.4 599.7 2487.0 598.3 C2484.7 596.9 2483.3 596.2 2482.0 594.0 C2480.6 591.8 2479.3 587.7 2478.9 585.1 C2478.4 582.5 2479.2 579.6 2479.2 578.5 M2500.6 603.9 C2499.3 603.6 2495.1 603.5 2492.9 602.3 C2490.8 601.1 2489.0 598.1 2487.6 596.7 C2486.3 595.3 2486.3 595.4 2484.6 594.0 C2482.9 592.5 2478.2 590.4 2477.2 588.2 C2476.2 585.9 2478.4 581.7 2478.6 580.4 M2476.3 580.6 C2480.2 554.6 2478.8 531.9 2478.1 508.7 M2476.8 578.2 C2477.6 560.4 2477.2 541.9 2478.4 507.9 M2477.3 507.7 C2477.7 506.6 2478.9 503.1 2479.8 500.7 C2480.7 498.3 2481.4 495.3 2482.8 493.4 C2484.1 491.5 2485.9 490.5 2488.1 489.1 C2490.3 487.7 2493.7 485.7 2495.9 485.2 C2498.1 484.7 2500.4 486.0 2501.4 486.2 M2476.1 509.0 C2476.6 507.6 2478.3 503.0 2479.1 500.7 C2480.0 498.3 2480.0 497.1 2481.1 494.9 C2482.2 492.7 2483.7 489.0 2485.8 487.4 C2487.9 485.9 2491.1 485.9 2493.6 485.6 C2496.2 485.4 2499.7 485.9 2500.9 485.9" fill="none" stroke="#046b5e" stroke-width="2.3" stroke-linecap="round" stroke-linejoin="round" />
<path d="M2478.8 545.7 C2569.1 543.3 2660.0 540.8 2800.3 544.1 M2477.9 544.8 C2545.6 544.3 2611.4 543.6 2799.5 544.8" fill="none" stroke="#046b5e" stroke-width="2.6" stroke-linecap="round" stroke-linejoin="round" />
<g transform="translate(2487.3 495.5)"><rect x="0.6" y="0.6" width="19.4" height="19" rx="2" fill="#d9e0ea" stroke="#9ba8ba" stroke-width="1.2"/><rect x="1.8" y="1.8" width="17" height="6.5" rx="1.2" fill="#eef2f7" stroke="none"/><rect x="4.3" y="8" width="12" height="3.5" fill="#1a1a1a"/></g>
<text x="2638.5" y="525.5" font-size="28" fill="#5c5c5c" text-anchor="middle" letter-spacing="1.5">1.9</text>
<text x="2636.5" y="582.5" font-size="26" fill="#5c5c5c" text-anchor="middle" letter-spacing="0">Row 1</text>
<circle cx="2273.5" cy="546.5" r="33.5" fill="#00c2a8"/>
<path d="M2308.0 546.9 C2307.2 549.6 2306.3 558.3 2303.4 563.1 C2300.6 568.0 2295.8 572.9 2290.7 576.0 C2285.7 579.1 2278.7 581.8 2273.1 581.8 C2267.6 581.8 2262.0 579.1 2257.3 576.1 C2252.6 573.0 2248.0 568.1 2244.9 563.3 C2241.9 558.4 2239.0 552.5 2238.8 546.9 C2238.7 541.2 2241.2 534.1 2244.2 529.2 C2247.2 524.2 2251.8 520.1 2256.6 517.3 C2261.5 514.4 2267.8 512.2 2273.4 512.2 C2279.0 512.2 2285.3 514.4 2290.4 517.2 C2295.4 520.1 2300.8 524.8 2303.6 529.6 C2306.4 534.4 2306.4 543.4 2307.0 546.1 M2306.3 556.2 C2304.5 558.8 2300.2 568.2 2296.0 572.0 C2291.7 575.9 2286.1 578.1 2280.8 579.3 C2275.4 580.5 2268.8 581.0 2263.6 579.4 C2258.4 577.9 2253.5 574.4 2249.6 570.1 C2245.8 565.8 2242.0 559.2 2240.3 553.6 C2238.7 548.0 2238.1 541.8 2239.9 536.5 C2241.6 531.1 2246.5 525.5 2250.8 521.5 C2255.1 517.6 2260.0 513.9 2265.4 512.8 C2270.8 511.7 2277.9 513.1 2283.2 515.0 C2288.6 516.8 2293.4 519.8 2297.4 523.9 C2301.4 528.0 2305.7 534.1 2307.3 539.5 C2308.8 545.0 2306.6 553.9 2306.5 556.8" fill="none" stroke="#046b5e" stroke-width="2.4" stroke-linecap="round" stroke-linejoin="round" />
<rect x="2868" y="381" width="312" height="113" fill="#00c2a8"/>
<path d="M2867.3 380.3 C2876.0 380.5 2902.1 381.9 2919.5 382.0 C2936.8 382.1 2954.0 381.0 2971.3 380.8 C2988.5 380.6 3005.7 380.8 3023.0 381.0 C3040.3 381.1 3058.0 381.9 3075.3 381.8 C3092.6 381.7 3109.4 380.4 3126.7 380.3 C3144.1 380.1 3170.6 380.8 3179.4 380.9 M2866.8 380.2 C2875.5 380.4 2901.4 381.3 2918.8 381.5 C2936.2 381.7 2953.7 381.6 2971.2 381.4 C2988.6 381.3 3006.2 380.8 3023.5 380.8 C3040.8 380.8 3057.6 381.4 3075.0 381.4 C3092.3 381.4 3110.2 380.8 3127.7 380.8 C3145.1 380.7 3170.9 381.0 3179.6 381.1" fill="none" stroke="#046b5e" stroke-width="4.6" stroke-linecap="round" stroke-linejoin="round" />
<path d="M2867.2 491.8 C2875.8 492.3 2901.8 495.0 2919.0 495.1 C2936.3 495.1 2953.3 492.2 2970.7 492.1 C2988.1 491.9 3006.0 493.7 3023.4 494.1 C3040.8 494.6 3057.7 495.2 3075.0 494.9 C3092.4 494.6 3110.0 492.5 3127.3 492.4 C3144.6 492.3 3170.3 494.1 3178.9 494.4 M2866.8 491.3 C2875.6 491.9 2902.2 494.4 2919.6 494.6 C2936.9 494.9 2953.6 492.8 2970.8 492.8 C2988.0 492.8 3005.5 494.3 3022.7 494.5 C3040.0 494.8 3057.0 494.5 3074.4 494.1 C3091.7 493.7 3109.4 492.2 3126.9 492.3 C3144.4 492.5 3170.6 494.5 3179.4 494.9" fill="none" stroke="#046b5e" stroke-width="4.6" stroke-linecap="round" stroke-linejoin="round" />
<text x="3023" y="447.5" font-size="28" fill="#5c5c5c" text-anchor="middle" letter-spacing="1.2">Database</text>
<rect x="2868" y="606" width="312" height="112" fill="#00c2a8"/>
<path d="M2866.7 607.9 C2875.5 607.3 2902.0 604.4 2919.5 604.5 C2936.9 604.6 2954.3 608.5 2971.5 608.4 C2988.7 608.3 3005.3 604.6 3022.6 604.1 C3039.8 603.6 3057.3 605.5 3074.7 605.6 C3092.2 605.8 3109.9 605.4 3127.2 605.1 C3144.6 604.7 3170.2 603.7 3178.9 603.4 M2866.8 607.1 C2875.4 606.6 2901.1 604.0 2918.5 604.1 C2935.8 604.2 2953.4 607.7 2970.9 607.6 C2988.4 607.5 3006.3 604.1 3023.6 603.7 C3040.9 603.3 3057.5 605.1 3074.8 605.3 C3092.1 605.5 3110.2 605.2 3127.4 604.9 C3144.7 604.7 3169.9 603.9 3178.4 603.7" fill="none" stroke="#046b5e" stroke-width="4.6" stroke-linecap="round" stroke-linejoin="round" />
<path d="M2866.8 720.1 C2875.4 720.1 2901.3 720.2 2918.7 719.8 C2936.0 719.5 2953.4 718.2 2970.8 717.9 C2988.1 717.7 3005.4 718.8 3022.8 718.4 C3040.1 718.0 3057.5 715.4 3074.8 715.7 C3092.1 715.9 3109.3 719.5 3126.6 720.1 C3144.0 720.6 3170.2 719.3 3178.9 719.1 M2867.2 719.5 C2875.8 719.5 2901.2 719.9 2918.6 719.7 C2935.9 719.5 2953.9 718.4 2971.3 718.2 C2988.7 718.0 3005.7 718.7 3022.9 718.5 C3040.2 718.3 3057.3 716.4 3074.7 716.7 C3092.0 717.0 3109.8 719.8 3127.2 720.2 C3144.5 720.6 3170.2 719.4 3178.8 719.2" fill="none" stroke="#046b5e" stroke-width="4.6" stroke-linecap="round" stroke-linejoin="round" />
<text x="3023" y="672.0" font-size="28" fill="#5c5c5c" text-anchor="middle" letter-spacing="1.2">Database</text>
<rect x="2868" y="1005" width="312" height="114" fill="#00c2a8"/>
<path d="M2866.7 1005.8 C2875.4 1005.6 2902.0 1004.6 2919.4 1004.7 C2936.7 1004.8 2953.4 1006.3 2970.7 1006.2 C2988.0 1006.1 3005.7 1004.1 3023.2 1004.2 C3040.6 1004.2 3057.9 1006.5 3075.2 1006.5 C3092.5 1006.4 3109.8 1004.1 3127.1 1003.9 C3144.4 1003.6 3170.4 1004.7 3179.0 1004.9 M2866.3 1005.9 C2875.2 1005.8 2902.1 1005.0 2919.6 1005.1 C2937.1 1005.2 2954.2 1006.5 2971.3 1006.3 C2988.5 1006.1 3005.0 1004.0 3022.4 1004.1 C3039.8 1004.1 3058.3 1006.3 3075.7 1006.5 C3093.0 1006.6 3109.5 1004.9 3126.7 1004.7 C3144.0 1004.6 3170.5 1005.5 3179.2 1005.6" fill="none" stroke="#046b5e" stroke-width="4.6" stroke-linecap="round" stroke-linejoin="round" />
<path d="M2867.5 1120.4 C2876.0 1120.2 2901.7 1119.7 2918.9 1119.5 C2936.2 1119.2 2953.5 1119.0 2970.8 1119.0 C2988.1 1119.0 3005.3 1119.6 3022.6 1119.5 C3039.9 1119.4 3057.2 1118.3 3074.6 1118.6 C3092.1 1118.8 3109.9 1121.1 3127.3 1120.8 C3144.8 1120.6 3170.6 1117.7 3179.2 1117.1 M2867.1 1119.9 C2875.8 1119.9 2902.1 1119.9 2919.3 1119.8 C2936.6 1119.6 2953.4 1118.8 2970.6 1118.8 C2987.8 1118.7 3005.0 1119.6 3022.5 1119.4 C3039.9 1119.2 3057.8 1117.3 3075.3 1117.6 C3092.7 1117.9 3109.9 1121.0 3127.2 1121.1 C3144.4 1121.1 3170.0 1118.4 3178.6 1117.9" fill="none" stroke="#046b5e" stroke-width="4.6" stroke-linecap="round" stroke-linejoin="round" />
<text x="3023" y="1072.0" font-size="28" fill="#5c5c5c" text-anchor="middle" letter-spacing="1.2">Database</text>
<rect x="2478" y="485" width="321" height="118" fill="none" stroke="#00a8ff" stroke-width="1.6" stroke-dasharray="5 5"/>
<circle cx="2478" cy="485" r="7.2" fill="#00aaff"/>
<circle cx="2638.5" cy="485" r="7.2" fill="#00aaff"/>
<circle cx="2799" cy="485" r="7.2" fill="#00aaff"/>
<circle cx="2478" cy="544" r="7.2" fill="#00aaff"/>
<circle cx="2799" cy="544" r="7.2" fill="#00aaff"/>
<circle cx="2478" cy="603" r="7.2" fill="#00aaff"/>
<circle cx="2638.5" cy="603" r="7.2" fill="#00aaff"/>
<circle cx="2799" cy="603" r="7.2" fill="#00aaff"/>
<path d="M2630.5 543.5 L2638 536.0 L2645.5 543.5 L2638 551.0 Z" fill="#ff9a00" stroke="#fff" stroke-width="1"/>
<path d="M2771.0 514 L2778.5 506.5 L2786.0 514 L2778.5 521.5 Z" fill="#ff9a00" stroke="#fff" stroke-width="1"/>
<g transform="translate(2817.5 464.5)" fill="none" stroke="#00a8ff" stroke-width="3"><path d="M-4.5 -6.5 A8 8 0 1 0 4 -7" /><path d="M-1 -11.5 L5.5 -7 L-0.5 -2.5 Z" fill="#00a8ff" stroke="none"/></g></svg></div>
<div id="cedge" class="abs"></div>
<div class="abs" style="left:0;top:160px;width:3592px;height:1px;background:#eceef2"></div>
<div id="vtrack" class="abs"></div>
<div class="abs" style="left:3187px;top:722px;width:15px;height:574px;border-radius:8px;background:#c1c1c1"></div>
<div id="hscroll" class="abs"></div>
<div class="abs" style="left:3180px;top:1918px;width:28px;height:27px;background:#fff"></div>
<div class="abs" style="left:1181px;top:1925.5px;width:820px;height:14.5px;border-radius:8px;background:#c1c1c1"></div>
<div id="tabs" class="abs"></div>
<div class="abs" style="left:332px;top:1956px;width:16px;height:52px;background:linear-gradient(#f8f8f8,#ededed);border-left:4px solid #f4f4f4"></div><div class="abs" style="left:335px;top:1956px;width:1px;height:52px;background:#d9d9d9"></div>
<div class="abs" style="left:392px;top:1948px;width:217px;height:10px;background:#fdfdfd"></div>
<div class="abs" style="left:396px;top:1956px;width:217px;height:52px;background:linear-gradient(#fcfcfc,#eeeeee)"></div>
<div class="abs" style="left:395px;top:1962px;width:218px;text-align:center;font-size:20px;line-height:28px;font-weight:bold;color:#0a8037">Page-1</div>
<div class="abs" style="left:659px;top:1950px;width:1px;height:58px;background:#e6e7e9"></div>
<svg class="abs" style="left:369px;top:1969px" width="8" height="24"><rect x="1" y="0" width="5.2" height="5.2" fill="#8a8a8a"/><rect x="1" y="7.8" width="5.2" height="5.2" fill="#8a8a8a"/><rect x="1" y="15.6" width="5.2" height="5.2" fill="#8a8a8a"/></svg>
<svg class="abs" style="left:625px;top:1964px" width="22" height="22"><path d="M0 10.5 H21.5 M10.7 0 V21.5" stroke="#858585" stroke-width="4.2"/></svg>
<div id="panel" class="abs"></div>
<div class="abs" style="left:0;top:160px;width:3592px;height:1848px;overflow:hidden;pointer-events:none"><div class="abs" style="left:0;top:-160px;width:3592px;height:2010px"><div class="abs pl" style="top:152.1px;font-weight:normal;color:#6a6a6a;background:#fff">Horizontal</div>
<div class="abs pv" style="top:152.1px;background:#fff"></div>
<div class="abs cb on" style="left:3447px;top:160.4px"><svg width="20" height="20" viewBox="0 0 20 20" style="position:absolute;left:0;top:0"><path d="M4.6 10.6 L8.3 14.6 L15.2 5.4" fill="none" stroke="#fff" stroke-width="2.7" stroke-linecap="round" stroke-linejoin="round"/></svg></div>
<div class="abs pl" style="top:191.5px;font-weight:normal;color:#6a6a6a;background:#fcfcfc">Separator Color</div>
<div class="abs pv" style="top:191.5px;background:#fcfcfc"></div>
<div class="abs" style="left:3439.5px;top:200.0px;width:63px;height:18px;border:1.5px solid #8c8c8c;border-radius:5px;background:#e9e9e9"></div>
<div class="abs" style="left:3444px;top:203.5px;width:54px;height:10.5px;border:1.8px solid #111;background:linear-gradient(90deg,#fff 0 30%,#d0d0d0 30% 55%,#fff 55% 68%,#cfcfcf 68% 92%,#fff 92%)"></div>
<div class="abs pl wh" style="top:231.0px">Fill Opacity</div>
<div class="abs pv wh" style="top:231.0px">100</div>
<div class="abs pl alt" style="top:270.5px">Stroke Opacity</div>
<div class="abs pv alt" style="top:270.5px">100</div>
<div class="abs pl wh" style="top:309.9px">Text Overflow</div>
<div class="abs pv wh" style="top:309.9px">Visible</div>
<div class="abs pl alt" style="top:349.4px">Hide Label</div>
<div class="abs pv alt" style="top:349.4px"></div>
<div class="abs cb off" style="left:3447px;top:356.7px"></div>
<div class="abs pl wh" style="top:388.9px">Label Padding</div>
<div class="abs pv wh" style="top:388.9px">0</div>
<div class="abs pl alt" style="top:428.3px">Direction</div>
<div class="abs pv alt" style="top:428.3px">East</div>
<div class="abs pl wh" style="top:467.8px">Constraint</div>
<div class="abs pv wh" style="top:467.8px">None</div>
<div class="abs pl alt" style="top:507.3px">Rotate Constraint</div>
<div class="abs pv alt" style="top:507.3px"></div>
<div class="abs cb off" style="left:3447px;top:514.6px"></div>
<div class="abs pl wh" style="top:546.8px">Connectable</div>
<div class="abs pv wh" style="top:546.8px"></div>
<div class="abs cb on" style="left:3447px;top:555.1px"><svg width="20" height="20" viewBox="0 0 20 20" style="position:absolute;left:0;top:0"><path d="M4.6 10.6 L8.3 14.6 L15.2 5.4" fill="none" stroke="#fff" stroke-width="2.7" stroke-linecap="round" stroke-linejoin="round"/></svg></div>
<div class="abs pl alt" style="top:586.2px">Allow Arrows</div>
<div class="abs pv alt" style="top:586.2px"></div>
<div class="abs cb on" style="left:3447px;top:594.5px"><svg width="20" height="20" viewBox="0 0 20 20" style="position:absolute;left:0;top:0"><path d="M4.6 10.6 L8.3 14.6 L15.2 5.4" fill="none" stroke="#fff" stroke-width="2.7" stroke-linecap="round" stroke-linejoin="round"/></svg></div>
<div class="abs pl wh" style="top:625.7px">Snap to Point</div>
<div class="abs pv wh" style="top:625.7px"></div>
<div class="abs cb off" style="left:3447px;top:633.0px"></div>
<div class="abs pl alt" style="top:665.2px">Perimeter</div>
<div class="abs pv alt" style="top:665.2px">Rectangle</div>
<div class="abs pl wh" style="top:704.6px">Fixed Dash</div>
<div class="abs pv wh" style="top:704.6px"></div>
<div class="abs cb off" style="left:3447px;top:711.9px"></div>
<div class="abs pl alt" style="top:744.1px">Autosize</div>
<div class="abs pv alt" style="top:744.1px"></div>
<div class="abs cb off" style="left:3447px;top:751.4px"></div>
<div class="abs pl wh" style="top:783.6px">Container</div>
<div class="abs pv wh" style="top:783.6px"></div>
<div class="abs cb off" style="left:3447px;top:790.9px"></div>
<div class="abs pl alt" style="top:823.0px">Drop Target</div>
<div class="abs pv alt" style="top:823.0px"></div>
<div class="abs cb on" style="left:3447px;top:831.3px"><svg width="20" height="20" viewBox="0 0 20 20" style="position:absolute;left:0;top:0"><path d="M4.6 10.6 L8.3 14.6 L15.2 5.4" fill="none" stroke="#fff" stroke-width="2.7" stroke-linecap="round" stroke-linejoin="round"/></svg></div>
<div class="abs pl wh" style="top:862.5px">Collapsible</div>
<div class="abs pv wh" style="top:862.5px"></div>
<div class="abs cb on" style="left:3447px;top:870.8px"><svg width="20" height="20" viewBox="0 0 20 20" style="position:absolute;left:0;top:0"><path d="M4.6 10.6 L8.3 14.6 L15.2 5.4" fill="none" stroke="#fff" stroke-width="2.7" stroke-linecap="round" stroke-linejoin="round"/></svg></div>
<div class="abs pl alt" style="top:902.0px">Expand</div>
<div class="abs pv alt" style="top:902.0px"></div>
<div class="abs cb on" style="left:3447px;top:910.3px"><svg width="20" height="20" viewBox="0 0 20 20" style="position:absolute;left:0;top:0"><path d="M4.6 10.6 L8.3 14.6 L15.2 5.4" fill="none" stroke="#fff" stroke-width="2.7" stroke-linecap="round" stroke-linejoin="round"/></svg></div>
<div class="abs pl wh" style="top:941.5px">Editable</div>
<div class="abs pv wh" style="top:941.5px"></div>
<div class="abs cb on" style="left:3447px;top:949.8px"><svg width="20" height="20" viewBox="0 0 20 20" style="position:absolute;left:0;top:0"><path d="M4.6 10.6 L8.3 14.6 L15.2 5.4" fill="none" stroke="#fff" stroke-width="2.7" stroke-linecap="round" stroke-linejoin="round"/></svg></div>
<div class="abs pl alt" style="top:980.9px">Edit Dialog</div>
<div class="abs pv alt" style="top:980.9px"></div>
<div class="abs cb off" style="left:3447px;top:988.2px"></div>
<div class="abs pl wh" style="top:1020.4px">Background Outline</div>
<div class="abs pv wh" style="top:1020.4px"></div>
<div class="abs cb off" style="left:3447px;top:1027.7px"></div>
<div class="abs pl alt" style="top:1059.9px">Movable</div>
<div class="abs pv alt" style="top:1059.9px"></div>
<div class="abs cb on" style="left:3447px;top:1068.2px"><svg width="20" height="20" viewBox="0 0 20 20" style="position:absolute;left:0;top:0"><path d="M4.6 10.6 L8.3 14.6 L15.2 5.4" fill="none" stroke="#fff" stroke-width="2.7" stroke-linecap="round" stroke-linejoin="round"/></svg></div>
<div class="abs pl wh" style="top:1099.3px">Movable Label</div>
<div class="abs pv wh" style="top:1099.3px"></div>
<div class="abs cb off" style="left:3447px;top:1106.6px"></div>
<div class="abs pl alt" style="top:1138.8px">Resizable</div>
<div class="abs pv alt" style="top:1138.8px"></div>
<div class="abs cb on" style="left:3447px;top:1147.1px"><svg width="20" height="20" viewBox="0 0 20 20" style="position:absolute;left:0;top:0"><path d="M4.6 10.6 L8.3 14.6 L15.2 5.4" fill="none" stroke="#fff" stroke-width="2.7" stroke-linecap="round" stroke-linejoin="round"/></svg></div>
<div class="abs pl wh" style="top:1178.3px">Resize Width</div>
<div class="abs pv wh" style="top:1178.3px"></div>
<div class="abs cb off" style="left:3447px;top:1185.6px"></div>
<div class="abs pl alt" style="top:1217.8px">Resize Height</div>
<div class="abs pv alt" style="top:1217.8px"></div>
<div class="abs cb off" style="left:3447px;top:1225.0px"></div>
<div class="abs pl wh" style="top:1257.2px">Rotatable</div>
<div class="abs pv wh" style="top:1257.2px"></div>
<div class="abs cb on" style="left:3447px;top:1265.5px"><svg width="20" height="20" viewBox="0 0 20 20" style="position:absolute;left:0;top:0"><path d="M4.6 10.6 L8.3 14.6 L15.2 5.4" fill="none" stroke="#fff" stroke-width="2.7" stroke-linecap="round" stroke-linejoin="round"/></svg></div>
<div class="abs pl alt" style="top:1296.7px">Cloneable</div>
<div class="abs pv alt" style="top:1296.7px"></div>
<div class="abs cb on" style="left:3447px;top:1305.0px"><svg width="20" height="20" viewBox="0 0 20 20" style="position:absolute;left:0;top:0"><path d="M4.6 10.6 L8.3 14.6 L15.2 5.4" fill="none" stroke="#fff" stroke-width="2.7" stroke-linecap="round" stroke-linejoin="round"/></svg></div>
<div class="abs pl wh" style="top:1336.2px">Deletable</div>
<div class="abs pv wh" style="top:1336.2px"></div>
<div class="abs cb on" style="left:3447px;top:1344.5px"><svg width="20" height="20" viewBox="0 0 20 20" style="position:absolute;left:0;top:0"><path d="M4.6 10.6 L8.3 14.6 L15.2 5.4" fill="none" stroke="#fff" stroke-width="2.7" stroke-linecap="round" stroke-linejoin="round"/></svg></div>
<div class="abs pl alt" style="top:1375.6px">Tree Folding</div>
<div class="abs pv alt" style="top:1375.6px"></div>
<div class="abs cb off" style="left:3447px;top:1382.9px"></div>
<div class="abs pl wh" style="top:1415.1px">Tree Moving</div>
<div class="abs pv wh" style="top:1415.1px"></div>
<div class="abs cb off" style="left:3447px;top:1422.4px"></div>
<div class="abs pl alt" style="top:1454.6px">Pointer Events</div>
<div class="abs pv alt" style="top:1454.6px"></div>
<div class="abs cb on" style="left:3447px;top:1462.9px"><svg width="20" height="20" viewBox="0 0 20 20" style="position:absolute;left:0;top:0"><path d="M4.6 10.6 L8.3 14.6 L15.2 5.4" fill="none" stroke="#fff" stroke-width="2.7" stroke-linecap="round" stroke-linejoin="round"/></svg></div>
<div class="abs pl wh" style="top:1494.0px">Move Cells on Fold</div>
<div class="abs pv wh" style="top:1494.0px"></div>
<div class="abs cb off" style="left:3447px;top:1501.3px"></div>
<div class="abs pl alt" style="top:1533.5px">Jiggle</div>
<div class="abs pv alt" style="top:1533.5px">5</div>
<div class="abs pl wh" style="top:1573.0px">Fill Weight</div>
<div class="abs pv wh" style="top:1573.0px">-1</div>
<div class="abs pl alt" style="top:1612.4px">Hachure Gap</div>
<div class="abs pv alt" style="top:1612.4px">-1</div>
<div class="abs pl wh" style="top:1651.9px">Hachure Angle</div>
<div class="abs pv wh" style="top:1651.9px">-41</div>
<div class="abs pl alt" style="top:1691.4px">Curve Fitting</div>
<div class="abs pv alt" style="top:1691.4px">0.95</div>
<div class="abs pl wh" style="top:1730.9px">Simplification</div>
<div class="abs pv wh" style="top:1730.9px">0</div>
<div class="abs pl alt" style="top:1770.3px">Disable Multi Stroke</div>
<div class="abs pv alt" style="top:1770.3px"></div>
<div class="abs cb off" style="left:3447px;top:1777.6px"></div>
<div class="abs pl wh" style="top:1809.8px">Disable Multi Stroke Fill</div>
<div class="abs pv wh" style="top:1809.8px"></div>
<div class="abs cb on" style="left:3447px;top:1818.1px"><svg width="20" height="20" viewBox="0 0 20 20" style="position:absolute;left:0;top:0"><path d="M4.6 10.6 L8.3 14.6 L15.2 5.4" fill="none" stroke="#fff" stroke-width="2.7" stroke-linecap="round" stroke-linejoin="round"/></svg></div>
<div class="abs pl alt" style="top:1849.3px">Dash Offset</div>
<div class="abs pv alt" style="top:1849.3px">-1</div>
<div class="abs pl wh" style="top:1888.7px">Dash Gap</div>
<div class="abs pv wh" style="top:1888.7px">-1</div>
<div class="abs pl alt" style="top:1928.2px">ZigZag Offset</div>
<div class="abs pv alt" style="top:1928.2px">-1</div>
<div class="abs pl sk" style="top:1967.7px">Sketch Style</div>
<div class="abs pv sk" style="top:1967.7px">Rough</div>
<div class="abs" style="left:3562px;top:160px;width:30px;height:1848px;background:#f4f4f4;border-left:2px solid #e4e4e4"></div>
<div class="abs" style="left:3570px;top:784px;width:15.8px;height:1222px;border-radius:8px;background:#bfbfbf"></div></div></div>
</div><div class="abs" style="left:3211px;top:1528.2px;width:355.1px;height:483.4px;border:6.2px solid #fb584a;border-top-width:7px;border-bottom-width:8px"></div></body></html>
